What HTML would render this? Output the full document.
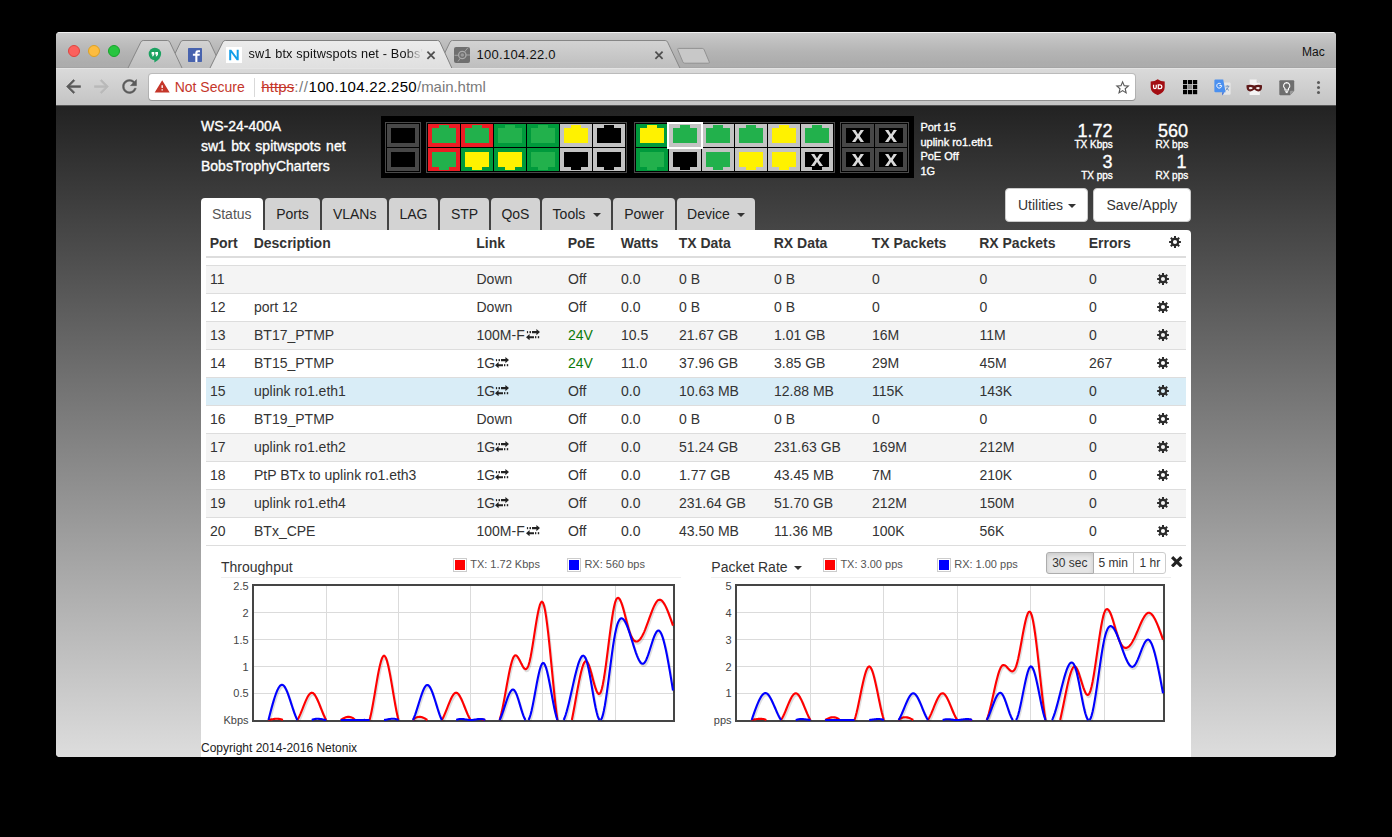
<!DOCTYPE html>
<html><head><meta charset="utf-8"><title>sw1</title>
<style>
*{box-sizing:border-box;margin:0;padding:0}
html,body{width:1392px;height:837px;background:#000;overflow:hidden}
body{font-family:"Liberation Sans",sans-serif;font-size:14px;color:#333;position:relative}
.abs{position:absolute}
#win{position:absolute;left:56px;top:32px;width:1280px;height:725px;border-radius:4px 4px 4px 4px;overflow:hidden;background:#ddd}
#titlebar{position:absolute;left:0;top:0;width:1280px;height:36px;background:linear-gradient(#f0f0f0 0,#f0f0f0 1px,#cbcbcb 1px,#c0c0c0 9px,#b4b4b4 20px,#adadad 30px,#ababab 36px)}
#toolbar{position:absolute;left:0;top:36px;width:1280px;height:38px;background:linear-gradient(#e4e4e4 0,#e4e4e4 1px,#dadada 1px,#c4c4c4 37px);border-bottom:1px solid #555;z-index:3}
#page{position:absolute;left:0;top:73px;width:1280px;height:652px;background:linear-gradient(#222,#ddd);overflow:hidden}
.t{position:absolute;white-space:nowrap;line-height:1}
</style></head>
<body>
<div id="win">
<div id="titlebar">
<div class="abs" style="left:12px;top:13px;width:12px;height:12px;border-radius:50%;background:#fc615d;border:0.5px solid #e0443e"></div>
<div class="abs" style="left:32px;top:13px;width:12px;height:12px;border-radius:50%;background:#fdbc40;border:0.5px solid #dea123"></div>
<div class="abs" style="left:52px;top:13px;width:12px;height:12px;border-radius:50%;background:#27c53f;border:0.5px solid #17a42a"></div>
<svg class="abs" style="left:0;top:0" width="1280" height="36" viewBox="0 0 1280 36">
<defs><linearGradient id="tg" x1="0" y1="0" x2="0" y2="1"><stop offset="0" stop-color="#d3d3d3"/><stop offset="1" stop-color="#bebebe"/></linearGradient><linearGradient id="ta" x1="0" y1="0" x2="0" y2="1"><stop offset="0" stop-color="#ececec"/><stop offset="1" stop-color="#dfdfdf"/></linearGradient></defs>
<rect x="0" y="35.3" width="1280" height="0.7" fill="#a2a2a2"/>
<path d="M381.5,36 L394.0,10.1 Q394.8,8.5 396.4,8.5 L609.2,8.5 Q610.8,8.5 611.6,10.1 L623.9,36" fill="url(#tg)" stroke="#868686" stroke-width="1"/>
<path d="M112.0,36 L124.6,10.1 Q125.4,8.5 127.0,8.5 L151.4,8.5 Q153.0,8.5 153.8,10.1 L166.0,36" fill="url(#tg)" stroke="#868686" stroke-width="1"/>
<path d="M72.0,36 L84.8,10.1 Q85.6,8.5 87.2,8.5 L111.4,8.5 Q113.0,8.5 113.8,10.1 L126.0,36" fill="url(#tg)" stroke="#868686" stroke-width="1"/>
<path d="M622.6,16.4 L646.3,16.4 Q647.6,16.4 648.2,17.8 L653.2,29.8 Q653.8,31.2 652.4,31.2 L628.8,31.2 Q627.4,31.2 626.8,29.8 L621.8,17.8 Q621.3,16.4 622.6,16.4 Z" fill="#c8c8c8" stroke="#929292" stroke-width="1"/>
<path d="M154.0,36 L166.8,10.1 Q167.6,8.5 169.2,8.5 L381.6,8.5 Q383.2,8.5 384.0,10.1 L395.8,36 L400,37 L150,37 Z" fill="url(#ta)" stroke="none"/>
<path d="M154.0,36 L166.8,10.1 Q167.6,8.5 169.2,8.5 L381.6,8.5 Q383.2,8.5 384.0,10.1 L395.8,36" fill="none" stroke="#808080" stroke-width="1"/>
<g transform="translate(98.9,22)"><circle cx="0" cy="0" r="6.2" fill="#1ba261"/><path d="M-0.5,5.5 L-0.5,8.6 Q3.6,6.8 5,3.6 Z" fill="#1ba261"/><path d="M-3.3,-2.1h2.7v2.5l-1.1,1.8h-1.3l0.9,-1.8h-1.2z M0.4,-2.1h2.7v2.5l-1.1,1.8h-1.3l0.9,-1.8h-1.2z" fill="#fff"/></g>
<rect x="132" y="16" width="14" height="14" rx="0.8" fill="#4863ae"/><path d="M139.3,30 V23.7 H136.9 V21.8 H139.3 V20.7 Q139.3,18.3 141.8,18.3 H144 V20.2 H142.5 Q141.4,20.2 141.4,21.2 V21.8 H143.9 L143.6,23.7 H141.4 V30 Z" fill="#fff"/>
<rect x="170" y="15" width="16" height="16" fill="#fff"/><path d="M173.2,28.3 V17.7 h2.1 l5.4,7.4 V17.7 h2 V28.3 h-2 l-5.5,-7.5 V28.3 z" fill="#129ee9"/>
<rect x="398" y="15" width="16" height="16" rx="2" fill="#6f6f6f"/><circle cx="406.3" cy="23" r="3.7" fill="none" stroke="#a9a9a9" stroke-width="1.3"/><circle cx="406.3" cy="23" r="1.8" fill="#9a9a9a"/><path d="M398.5,23.3 H402.5 M410,23 H414 M408.6,19.8 L412,15.6 M404.3,26.2 L402,29.5" stroke="#a9a9a9" stroke-width="0.9" fill="none"/>
<path d="M371.4,19.7 L378.6,26.900000000000002 M378.6,19.7 L371.4,26.900000000000002" stroke="#4f4f4f" stroke-width="1.75" fill="none"/>
<path d="M599.4,19.7 L606.6,26.900000000000002 M606.6,19.7 L599.4,26.900000000000002" stroke="#4f4f4f" stroke-width="1.75" fill="none"/>
</svg>
<div class="t" style="left:192.4px;top:15px;width:175px;overflow:hidden;font-size:12.7px;letter-spacing:0.17px;line-height:15px;color:#111;-webkit-mask-image:linear-gradient(90deg,#000 157px,transparent 175px);mask-image:linear-gradient(90deg,#000 157px,transparent 175px)">sw1 btx spitwspots net - Bobs'TrophyCharters</div>
<div class="t" style="left:420.5px;top:15px;font-size:13px;letter-spacing:0.29px;line-height:15px;color:#111">100.104.22.0</div>
<div class="t" style="left:1246px;top:13px;font-size:12px;line-height:14px;color:#111">Mac</div>
</div>
<div id="toolbar">
<svg class="abs" style="left:7.30px;top:8.20px" width="21.00" height="21" viewBox="0 0 24 24" preserveAspectRatio="none"><path d="M20 11H7.83l5.59-5.59L12 4l-8 8 8 8 1.41-1.41L7.83 13H20v-2z" fill="#5a5a5a" stroke="#5a5a5a" stroke-width="0.7" stroke-linejoin="miter"/></svg>
<svg class="abs" style="left:35.40px;top:8.20px" width="21.00" height="21" viewBox="0 0 24 24" preserveAspectRatio="none"><path d="M12 4l-1.41 1.41L16.17 11H4v2h12.17l-5.58 5.59L12 20l8-8z" fill="#b9b9b9" stroke="#b9b9b9" stroke-width="0.7" stroke-linejoin="miter"/></svg>
<svg class="abs" style="left:63.40px;top:8.30px" width="21.00" height="21" viewBox="0 0 24 24" preserveAspectRatio="none"><path d="M17.65 6.35C16.2 4.9 14.21 4 12 4c-4.42 0-7.99 3.58-7.99 8s3.57 8 7.99 8c3.73 0 6.84-2.55 7.73-6h-2.08c-.82 2.33-3.04 4-5.65 4-3.31 0-6-2.69-6-6s2.69-6 6-6c1.66 0 3.14.69 4.22 1.78L13 11h7V4l-2.35 2.35z" fill="#5a5a5a" stroke="#5a5a5a" stroke-width="0.5" stroke-linejoin="miter"/></svg>
<div class="abs" style="left:93px;top:6px;width:986px;height:26px;background:#fff;border-radius:3px;box-shadow:0 0 0 1px rgba(0,0,0,0.13),0 1px 0 0 rgba(0,0,0,0.16)"></div>
<svg class="abs" style="left:97.71px;top:10.95px" width="16.37" height="15.3" viewBox="0 0 24 24" preserveAspectRatio="none"><path d="M1 21h22L12 2 1 21zm12-3h-2v-2h2v2zm0-4h-2v-4h2v4z" fill="#c5362a" stroke="#c5362a" stroke-width="0" stroke-linejoin="miter"/></svg>
<div class="t" style="left:118.7px;top:10px;font-size:14px;line-height:18px;color:#c5362a">Not Secure</div>
<div class="abs" style="left:197.5px;top:9.5px;width:1px;height:19px;background:#d9d9d9"></div>
<div class="t" style="left:205.3px;top:9.5px;font-size:15px;line-height:18px;letter-spacing:0.3px;color:#7a7a7a"><span style="color:#c5362a;text-decoration:line-through;letter-spacing:0.08px">https</span><span style="letter-spacing:0.6px">://</span><span style="color:#000">100.104.22.250</span><span style="letter-spacing:-0.04px">/main.html</span></div>
<svg class="abs" style="left:1058.40px;top:10.70px" width="17.20" height="17.2" viewBox="0 0 24 24" preserveAspectRatio="none"><path d="M22 9.24l-7.19-.62L12 2 9.19 8.63 2 9.24l5.46 4.73L5.82 21 12 17.27 18.18 21l-1.63-7.03L22 9.24zM12 15.4l-3.76 2.27 1-4.28-3.32-2.88 4.38-.38L12 6.1l1.71 4.04 4.38.38-3.32 2.88 1 4.28L12 15.4z" fill="#5a5a5a" stroke="#5a5a5a" stroke-width="0" stroke-linejoin="miter"/></svg>
<svg class="abs" style="left:1094.3px;top:10.6px" width="15.4" height="16.4" viewBox="0 0 16 17" preserveAspectRatio="none"><path d="M8,0.3 Q5,2.6 0.7,2.7 V8.5 Q0.7,13.8 8,16.7 Q15.3,13.8 15.3,8.5 V2.7 Q11,2.6 8,0.3 Z" fill="#a30d12"/><path d="M3.7,6 V8.6 Q3.7,10.1 5.1,10.1 Q6.5,10.1 6.5,8.6 V6" fill="none" stroke="#fff" stroke-width="1.3"/><path d="M8.6,6.1 H10.3 Q12.3,6.1 12.3,8.05 Q12.3,10 10.3,10 H8.6 Z" fill="none" stroke="#fff" stroke-width="1.3"/></svg>
<svg class="abs" style="left:1126.6px;top:11.8px" width="15" height="15" viewBox="0 0 15 15"><rect x="0" y="0" width="4.2" height="4.2" fill="#000"/><rect x="5" y="0" width="4.2" height="4.2" fill="#000"/><rect x="10" y="0" width="4.2" height="4.2" fill="#000"/><rect x="0" y="5" width="4.2" height="4.2" fill="#000"/><rect x="5" y="5" width="4.2" height="4.2" fill="#8c8c8c"/><rect x="10" y="5" width="4.2" height="4.2" fill="#000"/><rect x="0" y="10" width="4.2" height="4.2" fill="#000"/><rect x="5" y="10" width="4.2" height="4.2" fill="#000"/><rect x="10" y="10" width="4.2" height="4.2" fill="#000"/></svg>
<svg class="abs" style="left:1157.5px;top:10.5px" width="17" height="17" viewBox="0 0 17 17"><path d="M6.5,3.5 H15.6 Q16.6,3.5 16.6,4.5 V14.8 Q16.6,15.8 15.6,15.8 H9.5 Z" fill="#e6e6e6"/><path d="M10.5,13.2 L8.2,16.4 L8.2,13.2 Z" fill="#3367d6"/><path d="M1.3,0.6 H9.2 L11.6,13.2 H1.3 Q0.4,13.2 0.4,12.3 V1.5 Q0.4,0.6 1.3,0.6 Z" fill="#4a90f0"/><path d="M7.6,6.6 H5.4 M7.6,6.6 A2.4,2.4 0 1 1 6.8,4.9" fill="none" stroke="#fff" stroke-width="1"/><path d="M11.4,7.2 H15.4 M13.3,6.3 V7.2 M14.6,7.3 Q13.8,10 11.6,11.4 M12.2,8.6 Q13,10.3 15,11.4" fill="none" stroke="#5f86b8" stroke-width="0.8"/></svg>
<svg class="abs" style="left:1189.5px;top:10.5px" width="17" height="17" viewBox="0 0 17 17"><path d="M3.6,0.6 H10.6 L13.8,3.8 V16 H3.6 Z" fill="#f4f4f4"/><path d="M10.6,0.6 L13.8,3.8 H10.6 Z" fill="#cfcfcf"/><path d="M0.5,6.2 Q4.5,5.4 8.3,6.4 Q12,5.4 16,6.2 Q16.6,11 13.4,12.3 Q10.4,12.9 8.3,10.6 Q6.2,12.9 3.2,12.3 Q0,11 0.5,6.2 Z" fill="#5e1818"/><path d="M2.8,8.4 Q5,7.6 6.9,8.9 Q5.5,10.6 3.7,10.2 Q2.8,9.7 2.8,8.4 Z M13.8,8.4 Q11.6,7.6 9.7,8.9 Q11.1,10.6 12.9,10.2 Q13.8,9.7 13.8,8.4 Z" fill="#f3eeee"/></svg>
<svg class="abs" style="left:1223px;top:12px" width="16" height="16" viewBox="0 0 16 16"><path d="M1.3,0.3 H14.2 Q15.2,0.3 15.2,1.3 V10.8 L11,15.2 H1.3 Q0.3,15.2 0.3,14.2 V1.3 Q0.3,0.3 1.3,0.3 Z" fill="#6e6e6e"/><path d="M15.2,10.8 L11,15.2 V11.8 Q11,10.8 12,10.8 Z" fill="#9a9a9a"/><path d="M7.7,2.6 A3.2,3.2 0 0 1 9.5,8.4 V10 H5.9 V8.4 A3.2,3.2 0 0 1 7.7,2.6 Z" fill="none" stroke="#fff" stroke-width="1.1"/><path d="M6.2,11.3 H9.2 M6.7,12.6 H8.7" stroke="#fff" stroke-width="1" fill="none"/></svg>
<div class="abs" style="left:1260.5px;top:12.5px;width:3px;height:3px;border-radius:50%;background:#5a5a5a"></div>
<div class="abs" style="left:1260.5px;top:17.5px;width:3px;height:3px;border-radius:50%;background:#5a5a5a"></div>
<div class="abs" style="left:1260.5px;top:22.5px;width:3px;height:3px;border-radius:50%;background:#5a5a5a"></div>
</div>
<div id="page">
<div class="t" style="left:145.00px;top:12.00px;color:#fff;-webkit-text-stroke:0.35px #fff;font-size:14px;line-height:19.8px">WS-24-400A<br><span style="word-spacing:1.5px">sw1 btx spitwspots net</span><br>BobsTrophyCharters</div>
<svg class="abs" style="left:325px;top:11px" width="533" height="62" viewBox="0 0 533 62" shape-rendering="crispEdges"><rect width="533" height="62" fill="#000"/><rect x="4.5" y="6.5" width="35" height="50" fill="none" stroke="#4a4a4a" stroke-width="1"/><rect x="45.5" y="6.5" width="200" height="50" fill="none" stroke="#4a4a4a" stroke-width="1"/><rect x="253.5" y="6.5" width="200" height="50" fill="none" stroke="#4a4a4a" stroke-width="1"/><rect x="459.5" y="6.5" width="68" height="50" fill="none" stroke="#4a4a4a" stroke-width="1"/><rect x="6" y="8" width="32" height="23" fill="#474747"/><rect x="10" y="12" width="24" height="15" fill="#000"/><rect x="6" y="32" width="32" height="23" fill="#474747"/><rect x="10" y="36" width="24" height="15" fill="#000"/><rect x="47" y="8" width="32" height="23" fill="#ed1c24"/><rect x="51" y="12" width="24" height="15" fill="#22b14c"/><rect x="58" y="9" width="10" height="3" fill="#22b14c"/><rect x="80" y="8" width="32" height="23" fill="#ed1c24"/><rect x="84" y="12" width="24" height="15" fill="#22b14c"/><rect x="91" y="9" width="10" height="3" fill="#22b14c"/><rect x="113" y="8" width="32" height="23" fill="#009a3c"/><rect x="117" y="12" width="24" height="15" fill="#22b14c"/><rect x="124" y="9" width="10" height="3" fill="#22b14c"/><rect x="146" y="8" width="32" height="23" fill="#009a3c"/><rect x="150" y="12" width="24" height="15" fill="#22b14c"/><rect x="157" y="9" width="10" height="3" fill="#22b14c"/><rect x="179" y="8" width="32" height="23" fill="#c3c3c3"/><rect x="183" y="12" width="24" height="15" fill="#fff200"/><rect x="190" y="9" width="10" height="3" fill="#fff200"/><rect x="212" y="8" width="32" height="23" fill="#c3c3c3"/><rect x="216" y="12" width="24" height="15" fill="#000"/><rect x="223" y="9" width="10" height="3" fill="#000"/><rect x="47" y="32" width="32" height="23" fill="#ed1c24"/><rect x="51" y="36" width="24" height="15" fill="#22b14c"/><rect x="58" y="51" width="10" height="3" fill="#22b14c"/><rect x="80" y="32" width="32" height="23" fill="#009a3c"/><rect x="84" y="36" width="24" height="15" fill="#fff200"/><rect x="91" y="51" width="10" height="3" fill="#fff200"/><rect x="113" y="32" width="32" height="23" fill="#009a3c"/><rect x="117" y="36" width="24" height="15" fill="#fff200"/><rect x="124" y="51" width="10" height="3" fill="#fff200"/><rect x="146" y="32" width="32" height="23" fill="#009a3c"/><rect x="150" y="36" width="24" height="15" fill="#22b14c"/><rect x="157" y="51" width="10" height="3" fill="#22b14c"/><rect x="179" y="32" width="32" height="23" fill="#c3c3c3"/><rect x="183" y="36" width="24" height="15" fill="#000"/><rect x="190" y="51" width="10" height="3" fill="#000"/><rect x="212" y="32" width="32" height="23" fill="#c3c3c3"/><rect x="216" y="36" width="24" height="15" fill="#000"/><rect x="223" y="51" width="10" height="3" fill="#000"/><rect x="255" y="8" width="32" height="23" fill="#009a3c"/><rect x="259" y="12" width="24" height="15" fill="#fff200"/><rect x="266" y="9" width="10" height="3" fill="#fff200"/><rect x="321" y="8" width="32" height="23" fill="#c3c3c3"/><rect x="325" y="12" width="24" height="15" fill="#22b14c"/><rect x="332" y="9" width="10" height="3" fill="#22b14c"/><rect x="354" y="8" width="32" height="23" fill="#c3c3c3"/><rect x="358" y="12" width="24" height="15" fill="#22b14c"/><rect x="365" y="9" width="10" height="3" fill="#22b14c"/><rect x="387" y="8" width="32" height="23" fill="#c3c3c3"/><rect x="391" y="12" width="24" height="15" fill="#fff200"/><rect x="398" y="9" width="10" height="3" fill="#fff200"/><rect x="420" y="8" width="32" height="23" fill="#c3c3c3"/><rect x="424" y="12" width="24" height="15" fill="#22b14c"/><rect x="431" y="9" width="10" height="3" fill="#22b14c"/><rect x="255" y="32" width="32" height="23" fill="#009a3c"/><rect x="259" y="36" width="24" height="15" fill="#22b14c"/><rect x="266" y="51" width="10" height="3" fill="#22b14c"/><rect x="288" y="32" width="32" height="23" fill="#c3c3c3"/><rect x="292" y="36" width="24" height="15" fill="#000"/><rect x="299" y="51" width="10" height="3" fill="#000"/><rect x="321" y="32" width="32" height="23" fill="#c3c3c3"/><rect x="325" y="36" width="24" height="15" fill="#22b14c"/><rect x="332" y="51" width="10" height="3" fill="#22b14c"/><rect x="354" y="32" width="32" height="23" fill="#c3c3c3"/><rect x="358" y="36" width="24" height="15" fill="#fff200"/><rect x="365" y="51" width="10" height="3" fill="#fff200"/><rect x="387" y="32" width="32" height="23" fill="#c3c3c3"/><rect x="391" y="36" width="24" height="15" fill="#fff200"/><rect x="398" y="51" width="10" height="3" fill="#fff200"/><rect x="420" y="32" width="32" height="23" fill="#c3c3c3"/><rect x="424" y="36" width="24" height="15" fill="#000"/><rect x="431" y="51" width="10" height="3" fill="#000"/><path d="M430.0,38.1 L433.4,38.1 L436.0,42.2 L438.6,38.1 L442.0,38.1 L437.8,44.1 L442.0,50.1 L438.6,50.1 L436.0,46.0 L433.4,50.1 L430.0,50.1 L434.2,44.1 Z" fill="#d9d9d9" shape-rendering="geometricPrecision"/><rect x="286" y="6" width="36" height="27" fill="#fff"/><rect x="288" y="8" width="32" height="23" fill="#c3c3c3"/><rect x="292" y="12" width="24" height="15" fill="#22b14c"/><rect x="299" y="9" width="10" height="3" fill="#22b14c"/><rect x="461" y="8" width="32" height="23" fill="#474747"/><rect x="465" y="12" width="24" height="15" fill="#000"/><path d="M471.0,14.1 L474.4,14.1 L477.0,18.2 L479.6,14.1 L483.0,14.1 L478.8,20.1 L483.0,26.1 L479.6,26.1 L477.0,22.0 L474.4,26.1 L471.0,26.1 L475.2,20.1 Z" fill="#d9d9d9" shape-rendering="geometricPrecision"/><rect x="461" y="32" width="32" height="23" fill="#474747"/><rect x="465" y="36" width="24" height="15" fill="#000"/><path d="M471.0,38.1 L474.4,38.1 L477.0,42.2 L479.6,38.1 L483.0,38.1 L478.8,44.1 L483.0,50.1 L479.6,50.1 L477.0,46.0 L474.4,50.1 L471.0,50.1 L475.2,44.1 Z" fill="#d9d9d9" shape-rendering="geometricPrecision"/><rect x="494" y="8" width="32" height="23" fill="#474747"/><rect x="498" y="12" width="24" height="15" fill="#000"/><path d="M504.0,14.1 L507.4,14.1 L510.0,18.2 L512.6,14.1 L516.0,14.1 L511.8,20.1 L516.0,26.1 L512.6,26.1 L510.0,22.0 L507.4,26.1 L504.0,26.1 L508.2,20.1 Z" fill="#d9d9d9" shape-rendering="geometricPrecision"/><rect x="494" y="32" width="32" height="23" fill="#474747"/><rect x="498" y="36" width="24" height="15" fill="#000"/><path d="M504.0,38.1 L507.4,38.1 L510.0,42.2 L512.6,38.1 L516.0,38.1 L511.8,44.1 L516.0,50.1 L512.6,50.1 L510.0,46.0 L507.4,50.1 L504.0,50.1 L508.2,44.1 Z" fill="#d9d9d9" shape-rendering="geometricPrecision"/></svg>
<div class="t" style="left:864.40px;top:14.60px;color:#fff;-webkit-text-stroke:0.35px #fff;font-size:11px;line-height:14.9px">Port 15<br>uplink ro1.eth1<br>PoE Off<br>1G</div>
<div class="t" style="right:223.40px;top:17.20px;font-size:18px;line-height:18px;color:#fff;-webkit-text-stroke:0.35px #fff;">1.72</div>
<div class="t" style="right:223.20px;top:34.90px;font-size:10px;line-height:10px;color:#fff;-webkit-text-stroke:0.35px #fff;">TX Kbps</div>
<div class="t" style="right:223.40px;top:48.40px;font-size:18px;line-height:18px;color:#fff;-webkit-text-stroke:0.35px #fff;">3</div>
<div class="t" style="right:223.20px;top:65.80px;font-size:10px;line-height:10px;color:#fff;-webkit-text-stroke:0.35px #fff;">TX pps</div>
<div class="t" style="right:148.00px;top:17.20px;font-size:18px;line-height:18px;color:#fff;-webkit-text-stroke:0.35px #fff;">560</div>
<div class="t" style="right:147.80px;top:34.90px;font-size:10px;line-height:10px;color:#fff;-webkit-text-stroke:0.35px #fff;">RX bps</div>
<div class="t" style="right:149.40px;top:48.40px;font-size:18px;line-height:18px;color:#fff;-webkit-text-stroke:0.35px #fff;">1</div>
<div class="t" style="right:147.80px;top:65.80px;font-size:10px;line-height:10px;color:#fff;-webkit-text-stroke:0.35px #fff;">RX pps</div>
<div class="abs" style="left:949.00px;top:83.00px;width:83px;height:34px;background:#fff;border:1px solid #ccc;border-radius:4px;"></div>
<div class="t" style="left:962.00px;top:90.00px;font-size:14px;line-height:20px;color:#333">Utilities<span style="display:inline-block;width:0;height:0;margin-left:4.6px;vertical-align:middle;border-top:4px solid #333;border-left:4px solid transparent;border-right:4px solid transparent"></span></div>
<div class="abs" style="left:1037.00px;top:83.00px;width:98px;height:34px;background:#fff;border:1px solid #ccc;border-radius:4px;"></div>
<div class="t" style="left:1050.50px;top:90.00px;font-size:14px;line-height:20px;color:#333">Save/Apply</div>
<div class="abs" style="left:145.00px;top:93px;width:61.50px;height:33px;background:#fff;border-radius:4px 4px 0 0;font-size:14px;line-height:20px;padding:6px 0 0 0;text-align:center;color:#555;white-space:nowrap">Status</div>
<div class="abs" style="left:209.20px;top:93px;width:54.60px;height:32px;background:#d3d3d3;border-radius:4px 4px 0 0;font-size:14px;line-height:20px;padding:6px 0 0 0;text-align:center;color:#222;white-space:nowrap">Ports</div>
<div class="abs" style="left:266.40px;top:93px;width:64.60px;height:32px;background:#d3d3d3;border-radius:4px 4px 0 0;font-size:14px;line-height:20px;padding:6px 0 0 0;text-align:center;color:#222;white-space:nowrap">VLANs</div>
<div class="abs" style="left:333.20px;top:93px;width:48.60px;height:32px;background:#d3d3d3;border-radius:4px 4px 0 0;font-size:14px;line-height:20px;padding:6px 0 0 0;text-align:center;color:#222;white-space:nowrap">LAG</div>
<div class="abs" style="left:384.00px;top:93px;width:49.00px;height:32px;background:#d3d3d3;border-radius:4px 4px 0 0;font-size:14px;line-height:20px;padding:6px 0 0 0;text-align:center;color:#222;white-space:nowrap">STP</div>
<div class="abs" style="left:435.10px;top:93px;width:48.70px;height:32px;background:#d3d3d3;border-radius:4px 4px 0 0;font-size:14px;line-height:20px;padding:6px 0 0 0;text-align:center;color:#222;white-space:nowrap">QoS</div>
<div class="abs" style="left:486.40px;top:93px;width:68.60px;height:32px;background:#d3d3d3;border-radius:4px 4px 0 0;font-size:14px;line-height:20px;padding:6px 0 0 0;text-align:center;color:#222;white-space:nowrap">Tools <span style="display:inline-block;width:0;height:0;margin-left:3.6px;vertical-align:middle;border-top:4px solid #333;border-left:4px solid transparent;border-right:4px solid transparent"></span></div>
<div class="abs" style="left:557.20px;top:93px;width:61.80px;height:32px;background:#d3d3d3;border-radius:4px 4px 0 0;font-size:14px;line-height:20px;padding:6px 0 0 0;text-align:center;color:#222;white-space:nowrap">Power</div>
<div class="abs" style="left:621.10px;top:93px;width:77.90px;height:32px;background:#d3d3d3;border-radius:4px 4px 0 0;font-size:14px;line-height:20px;padding:6px 0 0 0;text-align:center;color:#222;white-space:nowrap">Device <span style="display:inline-block;width:0;height:0;margin-left:3.2px;vertical-align:middle;border-top:4px solid #333;border-left:4px solid transparent;border-right:4px solid transparent"></span></div>
<div class="abs" style="left:145.00px;top:124.50px;width:990px;height:528px;background:#fff;border-radius:0 4px 0 0"></div>
<div class="t" style="left:153.70px;top:128.00px;font-weight:bold;font-size:14px;line-height:20px;color:#333">Port</div>
<div class="t" style="left:197.70px;top:128.00px;font-weight:bold;font-size:14px;line-height:20px;color:#333">Description</div>
<div class="t" style="left:420.20px;top:128.00px;font-weight:bold;font-size:14px;line-height:20px;color:#333">Link</div>
<div class="t" style="left:511.70px;top:128.00px;font-weight:bold;font-size:14px;line-height:20px;color:#333">PoE</div>
<div class="t" style="left:564.70px;top:128.00px;font-weight:bold;font-size:14px;line-height:20px;color:#333">Watts</div>
<div class="t" style="left:622.70px;top:128.00px;font-weight:bold;font-size:14px;line-height:20px;color:#333">TX Data</div>
<div class="t" style="left:717.70px;top:128.00px;font-weight:bold;font-size:14px;line-height:20px;color:#333">RX Data</div>
<div class="t" style="left:815.70px;top:128.00px;font-weight:bold;font-size:14px;line-height:20px;color:#333">TX Packets</div>
<div class="t" style="left:923.20px;top:128.00px;font-weight:bold;font-size:14px;line-height:20px;color:#333">RX Packets</div>
<div class="t" style="left:1032.70px;top:128.00px;font-weight:bold;font-size:14px;line-height:20px;color:#333">Errors</div>
<svg class="abs" style="left:1113.00px;top:131.00px" width="12" height="12" viewBox="0 0 24 24"><path d="M9.96,3.65 L9.97,0.17 L14.03,0.17 L14.04,3.65 L16.46,4.65 L18.93,2.20 L21.80,5.07 L19.35,7.54 L20.35,9.96 L23.83,9.97 L23.83,14.03 L20.35,14.04 L19.35,16.46 L21.80,18.93 L18.93,21.80 L16.46,19.35 L14.04,20.35 L14.03,23.83 L9.97,23.83 L9.96,20.35 L7.54,19.35 L5.07,21.80 L2.20,18.93 L4.65,16.46 L3.65,14.04 L0.17,14.03 L0.17,9.97 L3.65,9.96 L4.65,7.54 L2.20,5.07 L5.07,2.20 L7.54,4.65 Z M12,7.9 A4.1,4.1 0 1 0 12,16.1 A4.1,4.1 0 1 0 12,7.9 Z" fill="#2b2b2b" fill-rule="evenodd"/></svg>
<div class="abs" style="left:150.00px;top:151.00px;width:980px;height:2px;background:#ddd"></div>
<div class="abs" style="left:150.00px;top:160.00px;width:980px;height:28px;background:#f4f4f4;border-top:1px solid #ddd"></div>
<div class="t" style="left:154.00px;top:164.20px;font-size:14px;line-height:20px;color:#333">11</div>
<div class="t" style="left:420.50px;top:164.20px;font-size:14px;line-height:20px;color:#333">Down</div>
<div class="t" style="left:512.00px;top:164.20px;font-size:14px;line-height:20px;color:#333">Off</div>
<div class="t" style="left:565.00px;top:164.20px;font-size:14px;line-height:20px;color:#333">0.0</div>
<div class="t" style="left:623.00px;top:164.20px;font-size:14px;line-height:20px;color:#333">0 B</div>
<div class="t" style="left:718.00px;top:164.20px;font-size:14px;line-height:20px;color:#333">0 B</div>
<div class="t" style="left:816.00px;top:164.20px;font-size:14px;line-height:20px;color:#333">0</div>
<div class="t" style="left:923.50px;top:164.20px;font-size:14px;line-height:20px;color:#333">0</div>
<div class="t" style="left:1033.00px;top:164.20px;font-size:14px;line-height:20px;color:#333">0</div>
<svg class="abs" style="left:1101.00px;top:168.00px" width="12" height="12" viewBox="0 0 24 24"><path d="M9.96,3.65 L9.97,0.17 L14.03,0.17 L14.04,3.65 L16.46,4.65 L18.93,2.20 L21.80,5.07 L19.35,7.54 L20.35,9.96 L23.83,9.97 L23.83,14.03 L20.35,14.04 L19.35,16.46 L21.80,18.93 L18.93,21.80 L16.46,19.35 L14.04,20.35 L14.03,23.83 L9.97,23.83 L9.96,20.35 L7.54,19.35 L5.07,21.80 L2.20,18.93 L4.65,16.46 L3.65,14.04 L0.17,14.03 L0.17,9.97 L3.65,9.96 L4.65,7.54 L2.20,5.07 L5.07,2.20 L7.54,4.65 Z M12,7.9 A4.1,4.1 0 1 0 12,16.1 A4.1,4.1 0 1 0 12,7.9 Z" fill="#2b2b2b" fill-rule="evenodd"/></svg>
<div class="abs" style="left:150.00px;top:188.00px;width:980px;height:28px;background:#fff;border-top:1px solid #ddd"></div>
<div class="t" style="left:154.00px;top:192.20px;font-size:14px;line-height:20px;color:#333">12</div>
<div class="t" style="left:198.00px;top:192.20px;font-size:14px;line-height:20px;color:#333">port 12</div>
<div class="t" style="left:420.50px;top:192.20px;font-size:14px;line-height:20px;color:#333">Down</div>
<div class="t" style="left:512.00px;top:192.20px;font-size:14px;line-height:20px;color:#333">Off</div>
<div class="t" style="left:565.00px;top:192.20px;font-size:14px;line-height:20px;color:#333">0.0</div>
<div class="t" style="left:623.00px;top:192.20px;font-size:14px;line-height:20px;color:#333">0 B</div>
<div class="t" style="left:718.00px;top:192.20px;font-size:14px;line-height:20px;color:#333">0 B</div>
<div class="t" style="left:816.00px;top:192.20px;font-size:14px;line-height:20px;color:#333">0</div>
<div class="t" style="left:923.50px;top:192.20px;font-size:14px;line-height:20px;color:#333">0</div>
<div class="t" style="left:1033.00px;top:192.20px;font-size:14px;line-height:20px;color:#333">0</div>
<svg class="abs" style="left:1101.00px;top:196.00px" width="12" height="12" viewBox="0 0 24 24"><path d="M9.96,3.65 L9.97,0.17 L14.03,0.17 L14.04,3.65 L16.46,4.65 L18.93,2.20 L21.80,5.07 L19.35,7.54 L20.35,9.96 L23.83,9.97 L23.83,14.03 L20.35,14.04 L19.35,16.46 L21.80,18.93 L18.93,21.80 L16.46,19.35 L14.04,20.35 L14.03,23.83 L9.97,23.83 L9.96,20.35 L7.54,19.35 L5.07,21.80 L2.20,18.93 L4.65,16.46 L3.65,14.04 L0.17,14.03 L0.17,9.97 L3.65,9.96 L4.65,7.54 L2.20,5.07 L5.07,2.20 L7.54,4.65 Z M12,7.9 A4.1,4.1 0 1 0 12,16.1 A4.1,4.1 0 1 0 12,7.9 Z" fill="#2b2b2b" fill-rule="evenodd"/></svg>
<div class="abs" style="left:150.00px;top:216.00px;width:980px;height:28px;background:#f4f4f4;border-top:1px solid #ddd"></div>
<div class="t" style="left:154.00px;top:220.20px;font-size:14px;line-height:20px;color:#333">13</div>
<div class="t" style="left:198.00px;top:220.20px;font-size:14px;line-height:20px;color:#333">BT17_PTMP</div>
<div class="t" style="left:420.50px;top:220.20px;font-size:14px;line-height:20px;color:#333">100M-F</div>
<svg class="abs" style="left:470.00px;top:223.80px" width="14" height="11.2" viewBox="0 0 14 11.2"><g fill="#222"><path d="M10.4,0 L14,3.1 L10.4,6.2 V4.2 H6 V2.1 H10.4 Z"/><rect x="3.5" y="2.1" width="1.5" height="2.1"/><rect x="0.9" y="2.1" width="1.2" height="2.1"/><path d="M3.6,5.1 L0,8.2 L3.6,11.3 V9.25 H8 V7.15 H3.6 Z"/><rect x="9" y="7.15" width="1.3" height="2.1"/><rect x="11.8" y="7.15" width="1.4" height="2.1"/></g></svg>
<div class="t" style="left:512.00px;top:220.20px;font-size:14px;line-height:20px;color:#0a7a0a">24V</div>
<div class="t" style="left:565.00px;top:220.20px;font-size:14px;line-height:20px;color:#333">10.5</div>
<div class="t" style="left:623.00px;top:220.20px;font-size:14px;line-height:20px;color:#333">21.67 GB</div>
<div class="t" style="left:718.00px;top:220.20px;font-size:14px;line-height:20px;color:#333">1.01 GB</div>
<div class="t" style="left:816.00px;top:220.20px;font-size:14px;line-height:20px;color:#333">16M</div>
<div class="t" style="left:923.50px;top:220.20px;font-size:14px;line-height:20px;color:#333">11M</div>
<div class="t" style="left:1033.00px;top:220.20px;font-size:14px;line-height:20px;color:#333">0</div>
<svg class="abs" style="left:1101.00px;top:224.00px" width="12" height="12" viewBox="0 0 24 24"><path d="M9.96,3.65 L9.97,0.17 L14.03,0.17 L14.04,3.65 L16.46,4.65 L18.93,2.20 L21.80,5.07 L19.35,7.54 L20.35,9.96 L23.83,9.97 L23.83,14.03 L20.35,14.04 L19.35,16.46 L21.80,18.93 L18.93,21.80 L16.46,19.35 L14.04,20.35 L14.03,23.83 L9.97,23.83 L9.96,20.35 L7.54,19.35 L5.07,21.80 L2.20,18.93 L4.65,16.46 L3.65,14.04 L0.17,14.03 L0.17,9.97 L3.65,9.96 L4.65,7.54 L2.20,5.07 L5.07,2.20 L7.54,4.65 Z M12,7.9 A4.1,4.1 0 1 0 12,16.1 A4.1,4.1 0 1 0 12,7.9 Z" fill="#2b2b2b" fill-rule="evenodd"/></svg>
<div class="abs" style="left:150.00px;top:244.00px;width:980px;height:28px;background:#fff;border-top:1px solid #ddd"></div>
<div class="t" style="left:154.00px;top:248.20px;font-size:14px;line-height:20px;color:#333">14</div>
<div class="t" style="left:198.00px;top:248.20px;font-size:14px;line-height:20px;color:#333">BT15_PTMP</div>
<div class="t" style="left:420.50px;top:248.20px;font-size:14px;line-height:20px;color:#333">1G</div>
<svg class="abs" style="left:439.30px;top:251.80px" width="14" height="11.2" viewBox="0 0 14 11.2"><g fill="#222"><path d="M10.4,0 L14,3.1 L10.4,6.2 V4.2 H6 V2.1 H10.4 Z"/><rect x="3.5" y="2.1" width="1.5" height="2.1"/><rect x="0.9" y="2.1" width="1.2" height="2.1"/><path d="M3.6,5.1 L0,8.2 L3.6,11.3 V9.25 H8 V7.15 H3.6 Z"/><rect x="9" y="7.15" width="1.3" height="2.1"/><rect x="11.8" y="7.15" width="1.4" height="2.1"/></g></svg>
<div class="t" style="left:512.00px;top:248.20px;font-size:14px;line-height:20px;color:#0a7a0a">24V</div>
<div class="t" style="left:565.00px;top:248.20px;font-size:14px;line-height:20px;color:#333">11.0</div>
<div class="t" style="left:623.00px;top:248.20px;font-size:14px;line-height:20px;color:#333">37.96 GB</div>
<div class="t" style="left:718.00px;top:248.20px;font-size:14px;line-height:20px;color:#333">3.85 GB</div>
<div class="t" style="left:816.00px;top:248.20px;font-size:14px;line-height:20px;color:#333">29M</div>
<div class="t" style="left:923.50px;top:248.20px;font-size:14px;line-height:20px;color:#333">45M</div>
<div class="t" style="left:1033.00px;top:248.20px;font-size:14px;line-height:20px;color:#333">267</div>
<svg class="abs" style="left:1101.00px;top:252.00px" width="12" height="12" viewBox="0 0 24 24"><path d="M9.96,3.65 L9.97,0.17 L14.03,0.17 L14.04,3.65 L16.46,4.65 L18.93,2.20 L21.80,5.07 L19.35,7.54 L20.35,9.96 L23.83,9.97 L23.83,14.03 L20.35,14.04 L19.35,16.46 L21.80,18.93 L18.93,21.80 L16.46,19.35 L14.04,20.35 L14.03,23.83 L9.97,23.83 L9.96,20.35 L7.54,19.35 L5.07,21.80 L2.20,18.93 L4.65,16.46 L3.65,14.04 L0.17,14.03 L0.17,9.97 L3.65,9.96 L4.65,7.54 L2.20,5.07 L5.07,2.20 L7.54,4.65 Z M12,7.9 A4.1,4.1 0 1 0 12,16.1 A4.1,4.1 0 1 0 12,7.9 Z" fill="#2b2b2b" fill-rule="evenodd"/></svg>
<div class="abs" style="left:150.00px;top:272.00px;width:980px;height:28px;background:#d9edf7;border-top:1px solid #ddd"></div>
<div class="t" style="left:154.00px;top:276.20px;font-size:14px;line-height:20px;color:#333">15</div>
<div class="t" style="left:198.00px;top:276.20px;font-size:14px;line-height:20px;color:#333">uplink ro1.eth1</div>
<div class="t" style="left:420.50px;top:276.20px;font-size:14px;line-height:20px;color:#333">1G</div>
<svg class="abs" style="left:439.30px;top:279.80px" width="14" height="11.2" viewBox="0 0 14 11.2"><g fill="#222"><path d="M10.4,0 L14,3.1 L10.4,6.2 V4.2 H6 V2.1 H10.4 Z"/><rect x="3.5" y="2.1" width="1.5" height="2.1"/><rect x="0.9" y="2.1" width="1.2" height="2.1"/><path d="M3.6,5.1 L0,8.2 L3.6,11.3 V9.25 H8 V7.15 H3.6 Z"/><rect x="9" y="7.15" width="1.3" height="2.1"/><rect x="11.8" y="7.15" width="1.4" height="2.1"/></g></svg>
<div class="t" style="left:512.00px;top:276.20px;font-size:14px;line-height:20px;color:#333">Off</div>
<div class="t" style="left:565.00px;top:276.20px;font-size:14px;line-height:20px;color:#333">0.0</div>
<div class="t" style="left:623.00px;top:276.20px;font-size:14px;line-height:20px;color:#333">10.63 MB</div>
<div class="t" style="left:718.00px;top:276.20px;font-size:14px;line-height:20px;color:#333">12.88 MB</div>
<div class="t" style="left:816.00px;top:276.20px;font-size:14px;line-height:20px;color:#333">115K</div>
<div class="t" style="left:923.50px;top:276.20px;font-size:14px;line-height:20px;color:#333">143K</div>
<div class="t" style="left:1033.00px;top:276.20px;font-size:14px;line-height:20px;color:#333">0</div>
<svg class="abs" style="left:1101.00px;top:280.00px" width="12" height="12" viewBox="0 0 24 24"><path d="M9.96,3.65 L9.97,0.17 L14.03,0.17 L14.04,3.65 L16.46,4.65 L18.93,2.20 L21.80,5.07 L19.35,7.54 L20.35,9.96 L23.83,9.97 L23.83,14.03 L20.35,14.04 L19.35,16.46 L21.80,18.93 L18.93,21.80 L16.46,19.35 L14.04,20.35 L14.03,23.83 L9.97,23.83 L9.96,20.35 L7.54,19.35 L5.07,21.80 L2.20,18.93 L4.65,16.46 L3.65,14.04 L0.17,14.03 L0.17,9.97 L3.65,9.96 L4.65,7.54 L2.20,5.07 L5.07,2.20 L7.54,4.65 Z M12,7.9 A4.1,4.1 0 1 0 12,16.1 A4.1,4.1 0 1 0 12,7.9 Z" fill="#2b2b2b" fill-rule="evenodd"/></svg>
<div class="abs" style="left:150.00px;top:300.00px;width:980px;height:28px;background:#fff;border-top:1px solid #ddd"></div>
<div class="t" style="left:154.00px;top:304.20px;font-size:14px;line-height:20px;color:#333">16</div>
<div class="t" style="left:198.00px;top:304.20px;font-size:14px;line-height:20px;color:#333">BT19_PTMP</div>
<div class="t" style="left:420.50px;top:304.20px;font-size:14px;line-height:20px;color:#333">Down</div>
<div class="t" style="left:512.00px;top:304.20px;font-size:14px;line-height:20px;color:#333">Off</div>
<div class="t" style="left:565.00px;top:304.20px;font-size:14px;line-height:20px;color:#333">0.0</div>
<div class="t" style="left:623.00px;top:304.20px;font-size:14px;line-height:20px;color:#333">0 B</div>
<div class="t" style="left:718.00px;top:304.20px;font-size:14px;line-height:20px;color:#333">0 B</div>
<div class="t" style="left:816.00px;top:304.20px;font-size:14px;line-height:20px;color:#333">0</div>
<div class="t" style="left:923.50px;top:304.20px;font-size:14px;line-height:20px;color:#333">0</div>
<div class="t" style="left:1033.00px;top:304.20px;font-size:14px;line-height:20px;color:#333">0</div>
<svg class="abs" style="left:1101.00px;top:308.00px" width="12" height="12" viewBox="0 0 24 24"><path d="M9.96,3.65 L9.97,0.17 L14.03,0.17 L14.04,3.65 L16.46,4.65 L18.93,2.20 L21.80,5.07 L19.35,7.54 L20.35,9.96 L23.83,9.97 L23.83,14.03 L20.35,14.04 L19.35,16.46 L21.80,18.93 L18.93,21.80 L16.46,19.35 L14.04,20.35 L14.03,23.83 L9.97,23.83 L9.96,20.35 L7.54,19.35 L5.07,21.80 L2.20,18.93 L4.65,16.46 L3.65,14.04 L0.17,14.03 L0.17,9.97 L3.65,9.96 L4.65,7.54 L2.20,5.07 L5.07,2.20 L7.54,4.65 Z M12,7.9 A4.1,4.1 0 1 0 12,16.1 A4.1,4.1 0 1 0 12,7.9 Z" fill="#2b2b2b" fill-rule="evenodd"/></svg>
<div class="abs" style="left:150.00px;top:328.00px;width:980px;height:28px;background:#f4f4f4;border-top:1px solid #ddd"></div>
<div class="t" style="left:154.00px;top:332.20px;font-size:14px;line-height:20px;color:#333">17</div>
<div class="t" style="left:198.00px;top:332.20px;font-size:14px;line-height:20px;color:#333">uplink ro1.eth2</div>
<div class="t" style="left:420.50px;top:332.20px;font-size:14px;line-height:20px;color:#333">1G</div>
<svg class="abs" style="left:439.30px;top:335.80px" width="14" height="11.2" viewBox="0 0 14 11.2"><g fill="#222"><path d="M10.4,0 L14,3.1 L10.4,6.2 V4.2 H6 V2.1 H10.4 Z"/><rect x="3.5" y="2.1" width="1.5" height="2.1"/><rect x="0.9" y="2.1" width="1.2" height="2.1"/><path d="M3.6,5.1 L0,8.2 L3.6,11.3 V9.25 H8 V7.15 H3.6 Z"/><rect x="9" y="7.15" width="1.3" height="2.1"/><rect x="11.8" y="7.15" width="1.4" height="2.1"/></g></svg>
<div class="t" style="left:512.00px;top:332.20px;font-size:14px;line-height:20px;color:#333">Off</div>
<div class="t" style="left:565.00px;top:332.20px;font-size:14px;line-height:20px;color:#333">0.0</div>
<div class="t" style="left:623.00px;top:332.20px;font-size:14px;line-height:20px;color:#333">51.24 GB</div>
<div class="t" style="left:718.00px;top:332.20px;font-size:14px;line-height:20px;color:#333">231.63 GB</div>
<div class="t" style="left:816.00px;top:332.20px;font-size:14px;line-height:20px;color:#333">169M</div>
<div class="t" style="left:923.50px;top:332.20px;font-size:14px;line-height:20px;color:#333">212M</div>
<div class="t" style="left:1033.00px;top:332.20px;font-size:14px;line-height:20px;color:#333">0</div>
<svg class="abs" style="left:1101.00px;top:336.00px" width="12" height="12" viewBox="0 0 24 24"><path d="M9.96,3.65 L9.97,0.17 L14.03,0.17 L14.04,3.65 L16.46,4.65 L18.93,2.20 L21.80,5.07 L19.35,7.54 L20.35,9.96 L23.83,9.97 L23.83,14.03 L20.35,14.04 L19.35,16.46 L21.80,18.93 L18.93,21.80 L16.46,19.35 L14.04,20.35 L14.03,23.83 L9.97,23.83 L9.96,20.35 L7.54,19.35 L5.07,21.80 L2.20,18.93 L4.65,16.46 L3.65,14.04 L0.17,14.03 L0.17,9.97 L3.65,9.96 L4.65,7.54 L2.20,5.07 L5.07,2.20 L7.54,4.65 Z M12,7.9 A4.1,4.1 0 1 0 12,16.1 A4.1,4.1 0 1 0 12,7.9 Z" fill="#2b2b2b" fill-rule="evenodd"/></svg>
<div class="abs" style="left:150.00px;top:356.00px;width:980px;height:28px;background:#fff;border-top:1px solid #ddd"></div>
<div class="t" style="left:154.00px;top:360.20px;font-size:14px;line-height:20px;color:#333">18</div>
<div class="t" style="left:198.00px;top:360.20px;font-size:14px;line-height:20px;color:#333">PtP BTx to uplink ro1.eth3</div>
<div class="t" style="left:420.50px;top:360.20px;font-size:14px;line-height:20px;color:#333">1G</div>
<svg class="abs" style="left:439.30px;top:363.80px" width="14" height="11.2" viewBox="0 0 14 11.2"><g fill="#222"><path d="M10.4,0 L14,3.1 L10.4,6.2 V4.2 H6 V2.1 H10.4 Z"/><rect x="3.5" y="2.1" width="1.5" height="2.1"/><rect x="0.9" y="2.1" width="1.2" height="2.1"/><path d="M3.6,5.1 L0,8.2 L3.6,11.3 V9.25 H8 V7.15 H3.6 Z"/><rect x="9" y="7.15" width="1.3" height="2.1"/><rect x="11.8" y="7.15" width="1.4" height="2.1"/></g></svg>
<div class="t" style="left:512.00px;top:360.20px;font-size:14px;line-height:20px;color:#333">Off</div>
<div class="t" style="left:565.00px;top:360.20px;font-size:14px;line-height:20px;color:#333">0.0</div>
<div class="t" style="left:623.00px;top:360.20px;font-size:14px;line-height:20px;color:#333">1.77 GB</div>
<div class="t" style="left:718.00px;top:360.20px;font-size:14px;line-height:20px;color:#333">43.45 MB</div>
<div class="t" style="left:816.00px;top:360.20px;font-size:14px;line-height:20px;color:#333">7M</div>
<div class="t" style="left:923.50px;top:360.20px;font-size:14px;line-height:20px;color:#333">210K</div>
<div class="t" style="left:1033.00px;top:360.20px;font-size:14px;line-height:20px;color:#333">0</div>
<svg class="abs" style="left:1101.00px;top:364.00px" width="12" height="12" viewBox="0 0 24 24"><path d="M9.96,3.65 L9.97,0.17 L14.03,0.17 L14.04,3.65 L16.46,4.65 L18.93,2.20 L21.80,5.07 L19.35,7.54 L20.35,9.96 L23.83,9.97 L23.83,14.03 L20.35,14.04 L19.35,16.46 L21.80,18.93 L18.93,21.80 L16.46,19.35 L14.04,20.35 L14.03,23.83 L9.97,23.83 L9.96,20.35 L7.54,19.35 L5.07,21.80 L2.20,18.93 L4.65,16.46 L3.65,14.04 L0.17,14.03 L0.17,9.97 L3.65,9.96 L4.65,7.54 L2.20,5.07 L5.07,2.20 L7.54,4.65 Z M12,7.9 A4.1,4.1 0 1 0 12,16.1 A4.1,4.1 0 1 0 12,7.9 Z" fill="#2b2b2b" fill-rule="evenodd"/></svg>
<div class="abs" style="left:150.00px;top:384.00px;width:980px;height:28px;background:#f4f4f4;border-top:1px solid #ddd"></div>
<div class="t" style="left:154.00px;top:388.20px;font-size:14px;line-height:20px;color:#333">19</div>
<div class="t" style="left:198.00px;top:388.20px;font-size:14px;line-height:20px;color:#333">uplink ro1.eth4</div>
<div class="t" style="left:420.50px;top:388.20px;font-size:14px;line-height:20px;color:#333">1G</div>
<svg class="abs" style="left:439.30px;top:391.80px" width="14" height="11.2" viewBox="0 0 14 11.2"><g fill="#222"><path d="M10.4,0 L14,3.1 L10.4,6.2 V4.2 H6 V2.1 H10.4 Z"/><rect x="3.5" y="2.1" width="1.5" height="2.1"/><rect x="0.9" y="2.1" width="1.2" height="2.1"/><path d="M3.6,5.1 L0,8.2 L3.6,11.3 V9.25 H8 V7.15 H3.6 Z"/><rect x="9" y="7.15" width="1.3" height="2.1"/><rect x="11.8" y="7.15" width="1.4" height="2.1"/></g></svg>
<div class="t" style="left:512.00px;top:388.20px;font-size:14px;line-height:20px;color:#333">Off</div>
<div class="t" style="left:565.00px;top:388.20px;font-size:14px;line-height:20px;color:#333">0.0</div>
<div class="t" style="left:623.00px;top:388.20px;font-size:14px;line-height:20px;color:#333">231.64 GB</div>
<div class="t" style="left:718.00px;top:388.20px;font-size:14px;line-height:20px;color:#333">51.70 GB</div>
<div class="t" style="left:816.00px;top:388.20px;font-size:14px;line-height:20px;color:#333">212M</div>
<div class="t" style="left:923.50px;top:388.20px;font-size:14px;line-height:20px;color:#333">150M</div>
<div class="t" style="left:1033.00px;top:388.20px;font-size:14px;line-height:20px;color:#333">0</div>
<svg class="abs" style="left:1101.00px;top:392.00px" width="12" height="12" viewBox="0 0 24 24"><path d="M9.96,3.65 L9.97,0.17 L14.03,0.17 L14.04,3.65 L16.46,4.65 L18.93,2.20 L21.80,5.07 L19.35,7.54 L20.35,9.96 L23.83,9.97 L23.83,14.03 L20.35,14.04 L19.35,16.46 L21.80,18.93 L18.93,21.80 L16.46,19.35 L14.04,20.35 L14.03,23.83 L9.97,23.83 L9.96,20.35 L7.54,19.35 L5.07,21.80 L2.20,18.93 L4.65,16.46 L3.65,14.04 L0.17,14.03 L0.17,9.97 L3.65,9.96 L4.65,7.54 L2.20,5.07 L5.07,2.20 L7.54,4.65 Z M12,7.9 A4.1,4.1 0 1 0 12,16.1 A4.1,4.1 0 1 0 12,7.9 Z" fill="#2b2b2b" fill-rule="evenodd"/></svg>
<div class="abs" style="left:150.00px;top:412.00px;width:980px;height:28px;background:#fff;border-top:1px solid #ddd"></div>
<div class="t" style="left:154.00px;top:416.20px;font-size:14px;line-height:20px;color:#333">20</div>
<div class="t" style="left:198.00px;top:416.20px;font-size:14px;line-height:20px;color:#333">BTx_CPE</div>
<div class="t" style="left:420.50px;top:416.20px;font-size:14px;line-height:20px;color:#333">100M-F</div>
<svg class="abs" style="left:470.00px;top:419.80px" width="14" height="11.2" viewBox="0 0 14 11.2"><g fill="#222"><path d="M10.4,0 L14,3.1 L10.4,6.2 V4.2 H6 V2.1 H10.4 Z"/><rect x="3.5" y="2.1" width="1.5" height="2.1"/><rect x="0.9" y="2.1" width="1.2" height="2.1"/><path d="M3.6,5.1 L0,8.2 L3.6,11.3 V9.25 H8 V7.15 H3.6 Z"/><rect x="9" y="7.15" width="1.3" height="2.1"/><rect x="11.8" y="7.15" width="1.4" height="2.1"/></g></svg>
<div class="t" style="left:512.00px;top:416.20px;font-size:14px;line-height:20px;color:#333">Off</div>
<div class="t" style="left:565.00px;top:416.20px;font-size:14px;line-height:20px;color:#333">0.0</div>
<div class="t" style="left:623.00px;top:416.20px;font-size:14px;line-height:20px;color:#333">43.50 MB</div>
<div class="t" style="left:718.00px;top:416.20px;font-size:14px;line-height:20px;color:#333">11.36 MB</div>
<div class="t" style="left:816.00px;top:416.20px;font-size:14px;line-height:20px;color:#333">100K</div>
<div class="t" style="left:923.50px;top:416.20px;font-size:14px;line-height:20px;color:#333">56K</div>
<div class="t" style="left:1033.00px;top:416.20px;font-size:14px;line-height:20px;color:#333">0</div>
<svg class="abs" style="left:1101.00px;top:420.00px" width="12" height="12" viewBox="0 0 24 24"><path d="M9.96,3.65 L9.97,0.17 L14.03,0.17 L14.04,3.65 L16.46,4.65 L18.93,2.20 L21.80,5.07 L19.35,7.54 L20.35,9.96 L23.83,9.97 L23.83,14.03 L20.35,14.04 L19.35,16.46 L21.80,18.93 L18.93,21.80 L16.46,19.35 L14.04,20.35 L14.03,23.83 L9.97,23.83 L9.96,20.35 L7.54,19.35 L5.07,21.80 L2.20,18.93 L4.65,16.46 L3.65,14.04 L0.17,14.03 L0.17,9.97 L3.65,9.96 L4.65,7.54 L2.20,5.07 L5.07,2.20 L7.54,4.65 Z M12,7.9 A4.1,4.1 0 1 0 12,16.1 A4.1,4.1 0 1 0 12,7.9 Z" fill="#2b2b2b" fill-rule="evenodd"/></svg>
<div class="abs" style="left:150.00px;top:440.00px;width:980px;height:1px;background:#ddd"></div>
<div class="t" style="left:165.00px;top:452.00px;font-size:14px;line-height:20px;color:#333">Throughput</div>
<div class="abs" style="left:165.00px;top:472.00px;width:460px;height:1px;background:#eee"></div>
<div class="abs" style="left:397.00px;top:452.50px;width:14px;height:14px;border:1px solid #ccc;padding:1px;background:#fff"></div><div class="abs" style="left:399.00px;top:454.50px;width:10px;height:10px;background:#ff0000"></div>
<div class="t" style="left:414.20px;top:451.60px;font-size:11px;line-height:14px;color:#545454">TX: 1.72 Kbps</div>
<div class="abs" style="left:511.00px;top:452.50px;width:14px;height:14px;border:1px solid #ccc;padding:1px;background:#fff"></div><div class="abs" style="left:513.00px;top:454.50px;width:10px;height:10px;background:#0000ff"></div>
<div class="t" style="left:528.40px;top:451.60px;font-size:11px;line-height:14px;color:#545454">RX: 560 bps</div>
<div class="t" style="left:655.30px;top:452.00px;font-size:14px;line-height:20px;color:#333">Packet Rate <span style="display:inline-block;width:0;height:0;margin-left:2.6px;vertical-align:middle;border-top:4px solid #333;border-left:4px solid transparent;border-right:4px solid transparent"></span></div>
<div class="abs" style="left:655.00px;top:472.00px;width:460px;height:1px;background:#eee"></div>
<div class="abs" style="left:767.20px;top:452.50px;width:14px;height:14px;border:1px solid #ccc;padding:1px;background:#fff"></div><div class="abs" style="left:769.20px;top:454.50px;width:10px;height:10px;background:#ff0000"></div>
<div class="t" style="left:784.40px;top:451.60px;font-size:11px;line-height:14px;color:#545454">TX: 3.00 pps</div>
<div class="abs" style="left:881.40px;top:452.50px;width:14px;height:14px;border:1px solid #ccc;padding:1px;background:#fff"></div><div class="abs" style="left:883.40px;top:454.50px;width:10px;height:10px;background:#0000ff"></div>
<div class="t" style="left:898.20px;top:451.60px;font-size:11px;line-height:14px;color:#545454">RX: 1.00 pps</div>
<div class="abs" style="left:990.00px;top:447.00px;width:48px;height:22px;background:#e6e6e6;border:1px solid #adadad;border-radius:3px 0 0 3px;box-shadow:inset 0 2px 4px rgba(0,0,0,0.12)"></div>
<div class="abs" style="left:1037.00px;top:447.00px;width:41px;height:22px;background:#fff;border:1px solid #ccc;border-left-color:#adadad"></div>
<div class="abs" style="left:1077.00px;top:447.00px;width:32.5px;height:22px;background:#fff;border:1px solid #ccc;border-radius:0 3px 3px 0"></div>
<div class="t" style="left:996.20px;top:449.00px;font-size:12px;line-height:18px;color:#333">30 sec</div>
<div class="t" style="left:1042.60px;top:449.00px;font-size:12px;line-height:18px;color:#333">5 min</div>
<div class="t" style="left:1083.60px;top:449.00px;font-size:12px;line-height:18px;color:#333">1 hr</div>
<svg class="abs" style="left:1115px;top:450.5px" width="11.5" height="11.5" viewBox="0 0 12 12"><path d="M2.3,0 L6,3.7 L9.7,0 L12,2.3 L8.3,6 L12,9.7 L9.7,12 L6,8.3 L2.3,12 L0,9.7 L3.7,6 L0,2.3 Z" fill="#222"/></svg>
<svg class="abs" style="left:158.00px;top:473.00px" width="467.0" height="150" viewBox="0 0 467.0 150"><defs><clipPath id="cp1"><rect x="40.00" y="8.00" width="420.00" height="135.10"/></clipPath></defs><path d="M112.50,8.00 V142.00 M184.50,8.00 V142.00 M256.50,8.00 V142.00 M328.50,8.00 V142.00 M401.50,8.00 V142.00 M40.00,115.50 H459.00 M40.00,88.50 H459.00 M40.00,61.50 H459.00 M40.00,34.50 H459.00" stroke="rgba(0,0,0,0.14)" stroke-width="1" fill="none" shape-rendering="crispEdges"/><rect x="39.00" y="7.00" width="421.00" height="136.00" fill="none" stroke="#454545" stroke-width="2"/><g clip-path="url(#cp1)"><path d="M54.45,142.00 L55.48,141.78 L56.51,141.56 L57.54,141.36 L58.58,141.17 L59.61,141.02 L60.64,140.90 L61.67,140.82 L62.70,140.79 L63.74,140.81 L64.77,140.90 L65.80,141.05 L66.83,141.28 L67.86,141.60 L68.90,142.00 L68.90,142.00 M83.34,142.00 L83.34,142.00 L84.38,140.25 L85.41,138.18 L86.44,135.87 L87.47,133.39 L88.50,130.80 L89.54,128.18 L90.57,125.61 L91.60,123.15 L92.63,120.86 L93.67,118.83 L94.70,117.13 L95.73,115.82 L96.76,114.97 L97.79,114.66 L98.83,114.94 L99.86,115.75 L100.89,117.03 L101.92,118.71 L102.95,120.72 L103.99,122.98 L105.02,125.43 L106.05,128.00 L107.08,130.62 L108.11,133.22 L109.15,135.73 L110.18,138.07 L111.21,140.19 L112.24,142.00 L112.24,142.00 M126.69,142.00 L126.69,142.00 L127.72,141.34 L128.75,140.72 L129.79,140.17 L130.82,139.70 L131.85,139.32 L132.88,139.04 L133.91,138.87 L134.95,138.83 L135.98,138.94 L137.01,139.19 L138.04,139.61 L139.07,140.21 L140.11,141.00 L141.14,142.00 L141.14,142.00 M155.59,142.00 L155.59,142.00 L156.62,137.85 L157.65,132.97 L158.68,127.51 L159.71,121.65 L160.75,115.56 L161.78,109.39 L162.81,103.33 L163.84,97.53 L164.87,92.16 L165.91,87.39 L166.94,83.40 L167.97,80.33 L169.00,78.37 L170.03,77.68 L171.07,78.37 L172.10,80.33 L173.13,83.39 L174.16,87.39 L175.19,92.16 L176.23,97.53 L177.26,103.33 L178.29,109.39 L179.32,115.56 L180.35,121.65 L181.39,127.51 L182.42,132.97 L183.45,137.85 L184.48,142.00 L184.48,142.00 M198.93,142.00 L198.93,142.00 L199.96,141.00 L201.00,140.21 L202.03,139.61 L203.06,139.19 L204.09,138.93 L205.12,138.83 L206.16,138.86 L207.19,139.03 L208.22,139.31 L209.25,139.69 L210.28,140.16 L211.32,140.72 L212.35,141.33 L213.38,142.00 L213.38,142.00 M227.83,142.00 L227.83,142.00 L228.86,140.17 L229.89,138.03 L230.92,135.66 L231.96,133.13 L232.99,130.51 L234.02,127.87 L235.05,125.29 L236.08,122.83 L237.12,120.56 L238.15,118.56 L239.18,116.90 L240.21,115.65 L241.24,114.88 L242.28,114.66 L243.31,115.05 L244.34,115.97 L245.37,117.37 L246.40,119.17 L247.44,121.28 L248.47,123.63 L249.50,126.15 L250.53,128.76 L251.56,131.38 L252.60,133.94 L253.63,136.36 L254.66,138.56 L255.69,140.46 L256.72,142.00 L256.72,142.00 M267.47,142.00 L268.08,141.81 L269.11,141.64 L270.14,141.69 L271.17,142.00 L271.17,142.00 M285.62,142.00 L285.62,142.00 L286.65,138.41 L287.68,134.12 L288.72,129.26 L289.75,123.98 L290.78,118.40 L291.81,112.68 L292.84,106.94 L293.88,101.34 L294.91,96.00 L295.94,91.08 L296.97,86.69 L298.00,83.00 L299.04,80.12 L300.07,78.22 L301.10,77.36 L302.13,77.43 L303.17,78.25 L304.20,79.66 L305.23,81.47 L306.26,83.51 L307.29,85.61 L308.33,87.60 L309.36,89.30 L310.39,90.53 L311.42,91.12 L312.45,90.90 L313.49,89.69 L314.52,87.33 L315.55,83.70 L316.58,78.97 L317.61,73.39 L318.65,67.20 L319.68,60.64 L320.71,53.95 L321.74,47.36 L322.77,41.13 L323.81,35.49 L324.84,30.69 L325.87,26.96 L326.90,24.54 L327.93,23.68 L328.97,24.62 L330.00,27.51 L331.03,32.20 L332.06,38.45 L333.09,46.03 L334.13,54.69 L335.16,64.19 L336.19,74.30 L337.22,84.77 L338.25,95.38 L339.29,105.88 L340.32,116.02 L341.35,125.59 L342.38,134.33 L343.41,142.00 L343.41,142.00 M357.86,142.00 L357.86,142.00 L358.89,136.79 L359.93,131.28 L360.96,125.57 L361.99,119.78 L363.02,114.03 L364.05,108.44 L365.09,103.11 L366.12,98.17 L367.15,93.72 L368.18,89.90 L369.21,86.80 L370.25,84.55 L371.28,83.25 L372.31,83.04 L373.34,83.96 L374.37,85.88 L375.41,88.60 L376.44,91.91 L377.47,95.61 L378.50,99.52 L379.53,103.43 L380.57,107.14 L381.60,110.45 L382.63,113.17 L383.66,115.09 L384.69,116.03 L385.73,115.77 L386.76,114.13 L387.79,110.97 L388.82,106.43 L389.85,100.75 L390.89,94.12 L391.92,86.78 L392.95,78.93 L393.98,70.80 L395.01,62.60 L396.05,54.55 L397.08,46.86 L398.11,39.75 L399.14,33.44 L400.17,28.14 L401.21,24.08 L402.24,21.41 L403.27,20.04 L404.30,19.84 L405.33,20.66 L406.37,22.37 L407.40,24.81 L408.43,27.86 L409.46,31.37 L410.50,35.19 L411.53,39.18 L412.56,43.22 L413.59,47.14 L414.62,50.81 L415.66,54.10 L416.69,56.87 L417.72,59.14 L418.75,60.92 L419.78,62.22 L420.82,63.08 L421.85,63.52 L422.88,63.54 L423.91,63.18 L424.94,62.45 L425.98,61.39 L427.01,60.00 L428.04,58.30 L429.07,56.33 L430.10,54.10 L431.14,51.63 L432.17,48.98 L433.20,46.19 L434.23,43.33 L435.26,40.44 L436.30,37.57 L437.33,34.78 L438.36,32.13 L439.39,29.66 L440.42,27.43 L441.46,25.48 L442.49,23.89 L443.52,22.69 L444.55,21.94 L445.58,21.67 L446.62,21.88 L447.65,22.51 L448.68,23.54 L449.71,24.93 L450.74,26.64 L451.78,28.64 L452.81,30.89 L453.84,33.36 L454.87,36.00 L455.90,38.79 L456.94,41.69 L457.97,44.66 L459.00,47.66" transform="translate(1,2)" stroke="rgba(0,0,0,0.13)" stroke-width="2.4" fill="none" stroke-linejoin="round"/><path d="M54.45,142.00 L55.48,141.78 L56.51,141.56 L57.54,141.36 L58.58,141.17 L59.61,141.02 L60.64,140.90 L61.67,140.82 L62.70,140.79 L63.74,140.81 L64.77,140.90 L65.80,141.05 L66.83,141.28 L67.86,141.60 L68.90,142.00 L68.90,142.00 M83.34,142.00 L83.34,142.00 L84.38,140.25 L85.41,138.18 L86.44,135.87 L87.47,133.39 L88.50,130.80 L89.54,128.18 L90.57,125.61 L91.60,123.15 L92.63,120.86 L93.67,118.83 L94.70,117.13 L95.73,115.82 L96.76,114.97 L97.79,114.66 L98.83,114.94 L99.86,115.75 L100.89,117.03 L101.92,118.71 L102.95,120.72 L103.99,122.98 L105.02,125.43 L106.05,128.00 L107.08,130.62 L108.11,133.22 L109.15,135.73 L110.18,138.07 L111.21,140.19 L112.24,142.00 L112.24,142.00 M126.69,142.00 L126.69,142.00 L127.72,141.34 L128.75,140.72 L129.79,140.17 L130.82,139.70 L131.85,139.32 L132.88,139.04 L133.91,138.87 L134.95,138.83 L135.98,138.94 L137.01,139.19 L138.04,139.61 L139.07,140.21 L140.11,141.00 L141.14,142.00 L141.14,142.00 M155.59,142.00 L155.59,142.00 L156.62,137.85 L157.65,132.97 L158.68,127.51 L159.71,121.65 L160.75,115.56 L161.78,109.39 L162.81,103.33 L163.84,97.53 L164.87,92.16 L165.91,87.39 L166.94,83.40 L167.97,80.33 L169.00,78.37 L170.03,77.68 L171.07,78.37 L172.10,80.33 L173.13,83.39 L174.16,87.39 L175.19,92.16 L176.23,97.53 L177.26,103.33 L178.29,109.39 L179.32,115.56 L180.35,121.65 L181.39,127.51 L182.42,132.97 L183.45,137.85 L184.48,142.00 L184.48,142.00 M198.93,142.00 L198.93,142.00 L199.96,141.00 L201.00,140.21 L202.03,139.61 L203.06,139.19 L204.09,138.93 L205.12,138.83 L206.16,138.86 L207.19,139.03 L208.22,139.31 L209.25,139.69 L210.28,140.16 L211.32,140.72 L212.35,141.33 L213.38,142.00 L213.38,142.00 M227.83,142.00 L227.83,142.00 L228.86,140.17 L229.89,138.03 L230.92,135.66 L231.96,133.13 L232.99,130.51 L234.02,127.87 L235.05,125.29 L236.08,122.83 L237.12,120.56 L238.15,118.56 L239.18,116.90 L240.21,115.65 L241.24,114.88 L242.28,114.66 L243.31,115.05 L244.34,115.97 L245.37,117.37 L246.40,119.17 L247.44,121.28 L248.47,123.63 L249.50,126.15 L250.53,128.76 L251.56,131.38 L252.60,133.94 L253.63,136.36 L254.66,138.56 L255.69,140.46 L256.72,142.00 L256.72,142.00 M267.47,142.00 L268.08,141.81 L269.11,141.64 L270.14,141.69 L271.17,142.00 L271.17,142.00 M285.62,142.00 L285.62,142.00 L286.65,138.41 L287.68,134.12 L288.72,129.26 L289.75,123.98 L290.78,118.40 L291.81,112.68 L292.84,106.94 L293.88,101.34 L294.91,96.00 L295.94,91.08 L296.97,86.69 L298.00,83.00 L299.04,80.12 L300.07,78.22 L301.10,77.36 L302.13,77.43 L303.17,78.25 L304.20,79.66 L305.23,81.47 L306.26,83.51 L307.29,85.61 L308.33,87.60 L309.36,89.30 L310.39,90.53 L311.42,91.12 L312.45,90.90 L313.49,89.69 L314.52,87.33 L315.55,83.70 L316.58,78.97 L317.61,73.39 L318.65,67.20 L319.68,60.64 L320.71,53.95 L321.74,47.36 L322.77,41.13 L323.81,35.49 L324.84,30.69 L325.87,26.96 L326.90,24.54 L327.93,23.68 L328.97,24.62 L330.00,27.51 L331.03,32.20 L332.06,38.45 L333.09,46.03 L334.13,54.69 L335.16,64.19 L336.19,74.30 L337.22,84.77 L338.25,95.38 L339.29,105.88 L340.32,116.02 L341.35,125.59 L342.38,134.33 L343.41,142.00 L343.41,142.00 M357.86,142.00 L357.86,142.00 L358.89,136.79 L359.93,131.28 L360.96,125.57 L361.99,119.78 L363.02,114.03 L364.05,108.44 L365.09,103.11 L366.12,98.17 L367.15,93.72 L368.18,89.90 L369.21,86.80 L370.25,84.55 L371.28,83.25 L372.31,83.04 L373.34,83.96 L374.37,85.88 L375.41,88.60 L376.44,91.91 L377.47,95.61 L378.50,99.52 L379.53,103.43 L380.57,107.14 L381.60,110.45 L382.63,113.17 L383.66,115.09 L384.69,116.03 L385.73,115.77 L386.76,114.13 L387.79,110.97 L388.82,106.43 L389.85,100.75 L390.89,94.12 L391.92,86.78 L392.95,78.93 L393.98,70.80 L395.01,62.60 L396.05,54.55 L397.08,46.86 L398.11,39.75 L399.14,33.44 L400.17,28.14 L401.21,24.08 L402.24,21.41 L403.27,20.04 L404.30,19.84 L405.33,20.66 L406.37,22.37 L407.40,24.81 L408.43,27.86 L409.46,31.37 L410.50,35.19 L411.53,39.18 L412.56,43.22 L413.59,47.14 L414.62,50.81 L415.66,54.10 L416.69,56.87 L417.72,59.14 L418.75,60.92 L419.78,62.22 L420.82,63.08 L421.85,63.52 L422.88,63.54 L423.91,63.18 L424.94,62.45 L425.98,61.39 L427.01,60.00 L428.04,58.30 L429.07,56.33 L430.10,54.10 L431.14,51.63 L432.17,48.98 L433.20,46.19 L434.23,43.33 L435.26,40.44 L436.30,37.57 L437.33,34.78 L438.36,32.13 L439.39,29.66 L440.42,27.43 L441.46,25.48 L442.49,23.89 L443.52,22.69 L444.55,21.94 L445.58,21.67 L446.62,21.88 L447.65,22.51 L448.68,23.54 L449.71,24.93 L450.74,26.64 L451.78,28.64 L452.81,30.89 L453.84,33.36 L454.87,36.00 L455.90,38.79 L456.94,41.69 L457.97,44.66 L459.00,47.66" stroke="#ff0000" stroke-width="2.1" fill="none" stroke-linejoin="round"/></g><g clip-path="url(#cp1)"><path d="M54.45,142.00 L55.48,137.98 L56.51,134.01 L57.54,130.13 L58.58,126.39 L59.61,122.84 L60.64,119.52 L61.67,116.48 L62.70,113.77 L63.74,111.43 L64.77,109.51 L65.80,108.05 L66.83,107.11 L67.86,106.72 L68.90,106.95 L69.93,107.80 L70.96,109.22 L71.99,111.14 L73.02,113.47 L74.06,116.14 L75.09,119.05 L76.12,122.15 L77.15,125.34 L78.18,128.54 L79.22,131.68 L80.25,134.67 L81.28,137.45 L82.31,139.91 L83.34,142.00 L83.34,142.00 M97.79,142.00 L97.79,142.00 L98.83,141.56 L99.86,141.23 L100.89,141.01 L101.92,140.87 L102.95,140.81 L103.99,140.82 L105.02,140.89 L106.05,141.00 L107.08,141.15 L108.11,141.32 L109.15,141.50 L110.18,141.68 L111.21,141.85 L112.24,142.00 L112.24,142.00 M126.69,142.00 L126.69,142.00 L127.72,141.97 L128.75,141.95 L129.79,141.94 L130.82,141.93 L131.85,141.93 L132.88,141.94 L133.91,141.94 L134.95,141.95 L135.98,141.96 L137.01,141.97 L138.04,141.98 L139.07,141.99 L140.11,142.00 L141.14,142.00 L142.17,142.00 L143.20,141.99 L144.23,141.98 L145.27,141.97 L146.30,141.96 L147.33,141.95 L148.36,141.94 L149.39,141.93 L150.43,141.92 L151.46,141.93 L152.49,141.93 L153.52,141.95 L154.55,141.97 L155.59,142.00 L155.59,142.00 M170.03,142.00 L170.03,142.00 L171.07,141.84 L172.10,141.66 L173.13,141.46 L174.16,141.27 L175.19,141.08 L176.23,140.93 L177.26,140.80 L178.29,140.73 L179.32,140.72 L180.35,140.78 L181.39,140.93 L182.42,141.17 L183.45,141.53 L184.48,142.00 L184.48,142.00 M198.93,142.00 L198.93,142.00 L199.96,139.75 L201.00,137.10 L202.03,134.13 L203.06,130.94 L204.09,127.62 L205.12,124.25 L206.16,120.94 L207.19,117.78 L208.22,114.85 L209.25,112.25 L210.28,110.06 L211.32,108.39 L212.35,107.32 L213.38,106.95 L214.41,107.33 L215.44,108.40 L216.48,110.08 L217.51,112.27 L218.54,114.87 L219.57,117.81 L220.60,120.97 L221.64,124.28 L222.67,127.65 L223.70,130.97 L224.73,134.15 L225.76,137.12 L226.80,139.76 L227.83,142.00 L227.83,142.00 M242.28,142.00 L243.31,141.57 L244.34,141.26 L245.37,141.07 L246.40,140.97 L247.44,140.96 L248.47,141.01 L249.50,141.12 L250.53,141.26 L251.56,141.42 L252.60,141.58 L253.63,141.74 L254.66,141.87 L255.69,141.96 L256.72,142.00 L257.76,141.97 L258.79,141.89 L259.82,141.76 L260.85,141.61 L261.88,141.45 L262.92,141.29 L263.95,141.15 L264.98,141.05 L266.01,141.00 L267.04,141.01 L268.08,141.10 L269.11,141.29 L270.14,141.58 L271.17,142.00 L271.17,142.00 M285.62,142.00 L285.62,142.00 L286.65,139.82 L287.68,137.25 L288.72,134.39 L289.75,131.34 L290.78,128.19 L291.81,125.05 L292.84,122.02 L293.88,119.19 L294.91,116.66 L295.94,114.53 L296.97,112.89 L298.00,111.86 L299.04,111.53 L300.07,111.98 L301.10,113.29 L302.13,115.35 L303.17,117.99 L304.20,121.06 L305.23,124.42 L306.26,127.90 L307.29,131.36 L308.33,134.64 L309.36,137.59 L310.39,140.05 L311.42,141.88 L311.54,142.00 M314.52,142.00 L314.52,142.00 L315.55,139.80 L316.58,136.54 L317.61,132.42 L318.65,127.62 L319.68,122.35 L320.71,116.78 L321.74,111.12 L322.77,105.55 L323.81,100.27 L324.84,95.47 L325.87,91.34 L326.90,88.08 L327.93,85.87 L328.97,84.92 L330.00,85.34 L331.03,87.03 L332.06,89.81 L333.09,93.50 L334.13,97.94 L335.16,102.93 L336.19,108.31 L337.22,113.90 L338.25,119.52 L339.29,125.01 L340.32,130.17 L341.35,134.84 L342.38,138.84 L343.41,142.00 L343.41,142.00 M349.70,142.00 L350.64,139.78 L351.67,136.80 L352.70,133.37 L353.73,129.57 L354.77,125.46 L355.80,121.11 L356.83,116.59 L357.86,111.98 L358.89,107.36 L359.93,102.79 L360.96,98.36 L361.99,94.15 L363.02,90.24 L364.05,86.71 L365.09,83.65 L366.12,81.13 L367.15,79.24 L368.18,78.05 L369.21,77.64 L370.25,78.11 L371.28,79.52 L372.31,81.97 L373.34,85.47 L374.37,89.89 L375.41,95.03 L376.44,100.68 L377.47,106.64 L378.50,112.73 L379.53,118.74 L380.57,124.48 L381.60,129.74 L382.63,134.32 L383.66,138.04 L384.69,140.69 L385.67,142.00 M386.76,142.00 L386.76,142.00 L387.79,140.32 L388.82,137.18 L389.85,132.76 L390.89,127.26 L391.92,120.87 L392.95,113.78 L393.98,106.19 L395.01,98.28 L396.05,90.26 L397.08,82.32 L398.11,74.65 L399.14,67.43 L400.17,60.88 L401.21,55.17 L402.24,50.46 L403.27,46.72 L404.30,43.91 L405.33,41.94 L406.37,40.76 L407.40,40.31 L408.43,40.51 L409.46,41.32 L410.50,42.66 L411.53,44.47 L412.56,46.69 L413.59,49.26 L414.62,52.10 L415.66,55.17 L416.69,58.39 L417.72,61.70 L418.75,65.04 L419.78,68.34 L420.82,71.54 L421.85,74.57 L422.88,77.37 L423.91,79.88 L424.94,82.03 L425.98,83.77 L427.01,85.01 L428.04,85.70 L429.07,85.78 L430.10,85.18 L431.14,83.87 L432.17,81.94 L433.20,79.49 L434.23,76.65 L435.26,73.54 L436.30,70.27 L437.33,66.96 L438.36,63.73 L439.39,60.69 L440.42,57.96 L441.46,55.66 L442.49,53.90 L443.52,52.81 L444.55,52.49 L445.58,53.03 L446.62,54.41 L447.65,56.56 L448.68,59.41 L449.71,62.90 L450.74,66.96 L451.78,71.54 L452.81,76.56 L453.84,81.97 L454.87,87.69 L455.90,93.68 L456.94,99.85 L457.97,106.15 L459.00,112.52" transform="translate(1,2)" stroke="rgba(0,0,0,0.13)" stroke-width="2.4" fill="none" stroke-linejoin="round"/><path d="M54.45,142.00 L55.48,137.98 L56.51,134.01 L57.54,130.13 L58.58,126.39 L59.61,122.84 L60.64,119.52 L61.67,116.48 L62.70,113.77 L63.74,111.43 L64.77,109.51 L65.80,108.05 L66.83,107.11 L67.86,106.72 L68.90,106.95 L69.93,107.80 L70.96,109.22 L71.99,111.14 L73.02,113.47 L74.06,116.14 L75.09,119.05 L76.12,122.15 L77.15,125.34 L78.18,128.54 L79.22,131.68 L80.25,134.67 L81.28,137.45 L82.31,139.91 L83.34,142.00 L83.34,142.00 M97.79,142.00 L97.79,142.00 L98.83,141.56 L99.86,141.23 L100.89,141.01 L101.92,140.87 L102.95,140.81 L103.99,140.82 L105.02,140.89 L106.05,141.00 L107.08,141.15 L108.11,141.32 L109.15,141.50 L110.18,141.68 L111.21,141.85 L112.24,142.00 L112.24,142.00 M126.69,142.00 L126.69,142.00 L127.72,141.97 L128.75,141.95 L129.79,141.94 L130.82,141.93 L131.85,141.93 L132.88,141.94 L133.91,141.94 L134.95,141.95 L135.98,141.96 L137.01,141.97 L138.04,141.98 L139.07,141.99 L140.11,142.00 L141.14,142.00 L142.17,142.00 L143.20,141.99 L144.23,141.98 L145.27,141.97 L146.30,141.96 L147.33,141.95 L148.36,141.94 L149.39,141.93 L150.43,141.92 L151.46,141.93 L152.49,141.93 L153.52,141.95 L154.55,141.97 L155.59,142.00 L155.59,142.00 M170.03,142.00 L170.03,142.00 L171.07,141.84 L172.10,141.66 L173.13,141.46 L174.16,141.27 L175.19,141.08 L176.23,140.93 L177.26,140.80 L178.29,140.73 L179.32,140.72 L180.35,140.78 L181.39,140.93 L182.42,141.17 L183.45,141.53 L184.48,142.00 L184.48,142.00 M198.93,142.00 L198.93,142.00 L199.96,139.75 L201.00,137.10 L202.03,134.13 L203.06,130.94 L204.09,127.62 L205.12,124.25 L206.16,120.94 L207.19,117.78 L208.22,114.85 L209.25,112.25 L210.28,110.06 L211.32,108.39 L212.35,107.32 L213.38,106.95 L214.41,107.33 L215.44,108.40 L216.48,110.08 L217.51,112.27 L218.54,114.87 L219.57,117.81 L220.60,120.97 L221.64,124.28 L222.67,127.65 L223.70,130.97 L224.73,134.15 L225.76,137.12 L226.80,139.76 L227.83,142.00 L227.83,142.00 M242.28,142.00 L243.31,141.57 L244.34,141.26 L245.37,141.07 L246.40,140.97 L247.44,140.96 L248.47,141.01 L249.50,141.12 L250.53,141.26 L251.56,141.42 L252.60,141.58 L253.63,141.74 L254.66,141.87 L255.69,141.96 L256.72,142.00 L257.76,141.97 L258.79,141.89 L259.82,141.76 L260.85,141.61 L261.88,141.45 L262.92,141.29 L263.95,141.15 L264.98,141.05 L266.01,141.00 L267.04,141.01 L268.08,141.10 L269.11,141.29 L270.14,141.58 L271.17,142.00 L271.17,142.00 M285.62,142.00 L285.62,142.00 L286.65,139.82 L287.68,137.25 L288.72,134.39 L289.75,131.34 L290.78,128.19 L291.81,125.05 L292.84,122.02 L293.88,119.19 L294.91,116.66 L295.94,114.53 L296.97,112.89 L298.00,111.86 L299.04,111.53 L300.07,111.98 L301.10,113.29 L302.13,115.35 L303.17,117.99 L304.20,121.06 L305.23,124.42 L306.26,127.90 L307.29,131.36 L308.33,134.64 L309.36,137.59 L310.39,140.05 L311.42,141.88 L311.54,142.00 M314.52,142.00 L314.52,142.00 L315.55,139.80 L316.58,136.54 L317.61,132.42 L318.65,127.62 L319.68,122.35 L320.71,116.78 L321.74,111.12 L322.77,105.55 L323.81,100.27 L324.84,95.47 L325.87,91.34 L326.90,88.08 L327.93,85.87 L328.97,84.92 L330.00,85.34 L331.03,87.03 L332.06,89.81 L333.09,93.50 L334.13,97.94 L335.16,102.93 L336.19,108.31 L337.22,113.90 L338.25,119.52 L339.29,125.01 L340.32,130.17 L341.35,134.84 L342.38,138.84 L343.41,142.00 L343.41,142.00 M349.70,142.00 L350.64,139.78 L351.67,136.80 L352.70,133.37 L353.73,129.57 L354.77,125.46 L355.80,121.11 L356.83,116.59 L357.86,111.98 L358.89,107.36 L359.93,102.79 L360.96,98.36 L361.99,94.15 L363.02,90.24 L364.05,86.71 L365.09,83.65 L366.12,81.13 L367.15,79.24 L368.18,78.05 L369.21,77.64 L370.25,78.11 L371.28,79.52 L372.31,81.97 L373.34,85.47 L374.37,89.89 L375.41,95.03 L376.44,100.68 L377.47,106.64 L378.50,112.73 L379.53,118.74 L380.57,124.48 L381.60,129.74 L382.63,134.32 L383.66,138.04 L384.69,140.69 L385.67,142.00 M386.76,142.00 L386.76,142.00 L387.79,140.32 L388.82,137.18 L389.85,132.76 L390.89,127.26 L391.92,120.87 L392.95,113.78 L393.98,106.19 L395.01,98.28 L396.05,90.26 L397.08,82.32 L398.11,74.65 L399.14,67.43 L400.17,60.88 L401.21,55.17 L402.24,50.46 L403.27,46.72 L404.30,43.91 L405.33,41.94 L406.37,40.76 L407.40,40.31 L408.43,40.51 L409.46,41.32 L410.50,42.66 L411.53,44.47 L412.56,46.69 L413.59,49.26 L414.62,52.10 L415.66,55.17 L416.69,58.39 L417.72,61.70 L418.75,65.04 L419.78,68.34 L420.82,71.54 L421.85,74.57 L422.88,77.37 L423.91,79.88 L424.94,82.03 L425.98,83.77 L427.01,85.01 L428.04,85.70 L429.07,85.78 L430.10,85.18 L431.14,83.87 L432.17,81.94 L433.20,79.49 L434.23,76.65 L435.26,73.54 L436.30,70.27 L437.33,66.96 L438.36,63.73 L439.39,60.69 L440.42,57.96 L441.46,55.66 L442.49,53.90 L443.52,52.81 L444.55,52.49 L445.58,53.03 L446.62,54.41 L447.65,56.56 L448.68,59.41 L449.71,62.90 L450.74,66.96 L451.78,71.54 L452.81,76.56 L453.84,81.97 L454.87,87.69 L455.90,93.68 L456.94,99.85 L457.97,106.15 L459.00,112.52" stroke="#0000ff" stroke-width="2.1" fill="none" stroke-linejoin="round"/></g><text x="34.60" y="146.20" text-anchor="end" font-family="Liberation Sans, sans-serif" font-size="11" fill="#444">Kbps</text><text x="34.60" y="119.40" text-anchor="end" font-family="Liberation Sans, sans-serif" font-size="11" fill="#444">0.5</text><text x="34.60" y="92.60" text-anchor="end" font-family="Liberation Sans, sans-serif" font-size="11" fill="#444">1</text><text x="34.60" y="65.80" text-anchor="end" font-family="Liberation Sans, sans-serif" font-size="11" fill="#444">1.5</text><text x="34.60" y="39.00" text-anchor="end" font-family="Liberation Sans, sans-serif" font-size="11" fill="#444">2</text><text x="34.60" y="12.20" text-anchor="end" font-family="Liberation Sans, sans-serif" font-size="11" fill="#444">2.5</text></svg>
<svg class="abs" style="left:641.00px;top:473.00px" width="474.0" height="150" viewBox="0 0 474.0 150"><defs><clipPath id="cp2"><rect x="40.00" y="8.00" width="427.00" height="135.10"/></clipPath></defs><path d="M113.50,8.00 V142.00 M186.50,8.00 V142.00 M260.50,8.00 V142.00 M333.50,8.00 V142.00 M407.50,8.00 V142.00 M40.00,115.50 H466.00 M40.00,88.50 H466.00 M40.00,61.50 H466.00 M40.00,34.50 H466.00" stroke="rgba(0,0,0,0.14)" stroke-width="1" fill="none" shape-rendering="crispEdges"/><rect x="39.00" y="7.00" width="428.00" height="136.00" fill="none" stroke="#454545" stroke-width="2"/><g clip-path="url(#cp2)"><path d="M54.69,142.00 L55.74,141.78 L56.79,141.57 L57.84,141.37 L58.89,141.19 L59.94,141.04 L60.99,140.92 L62.03,140.84 L63.08,140.81 L64.13,140.84 L65.18,140.92 L66.23,141.07 L67.28,141.30 L68.33,141.61 L69.38,142.00 L69.38,142.00 M84.07,142.00 L84.07,142.00 L85.12,140.28 L86.17,138.25 L87.22,135.99 L88.27,133.55 L89.32,131.02 L90.36,128.45 L91.41,125.92 L92.46,123.51 L93.51,121.27 L94.56,119.28 L95.61,117.61 L96.66,116.33 L97.71,115.50 L98.76,115.20 L99.81,115.47 L100.86,116.27 L101.91,117.53 L102.96,119.18 L104.00,121.15 L105.05,123.37 L106.10,125.78 L107.15,128.30 L108.20,130.87 L109.25,133.42 L110.30,135.87 L111.35,138.16 L112.40,140.23 L113.45,142.00 L113.45,142.00 M128.14,142.00 L128.14,142.00 L129.19,141.39 L130.24,140.84 L131.29,140.36 L132.33,139.95 L133.38,139.62 L134.43,139.39 L135.48,139.26 L136.53,139.24 L137.58,139.34 L138.63,139.58 L139.68,139.95 L140.73,140.47 L141.78,141.15 L142.83,142.00 L142.83,142.00 M157.52,142.00 L157.52,142.00 L158.57,138.54 L159.62,134.47 L160.67,129.92 L161.71,125.04 L162.76,119.96 L163.81,114.82 L164.86,109.77 L165.91,104.93 L166.96,100.46 L168.01,96.49 L169.06,93.16 L170.11,90.61 L171.16,88.98 L172.21,88.40 L173.26,88.98 L174.31,90.61 L175.35,93.16 L176.40,96.49 L177.45,100.46 L178.50,104.93 L179.55,109.77 L180.60,114.82 L181.65,119.96 L182.70,125.04 L183.75,129.92 L184.80,134.47 L185.85,138.54 L186.90,142.00 L186.90,142.00 M201.59,142.00 L201.59,142.00 L202.64,141.15 L203.68,140.47 L204.73,139.95 L205.78,139.57 L206.83,139.34 L207.88,139.23 L208.93,139.25 L209.98,139.38 L211.03,139.61 L212.08,139.94 L213.13,140.35 L214.18,140.84 L215.23,141.39 L216.28,142.00 M230.97,142.00 L230.97,142.00 L232.01,140.22 L233.06,138.13 L234.11,135.82 L235.16,133.34 L236.21,130.78 L237.26,128.19 L238.31,125.66 L239.36,123.25 L240.41,121.02 L241.46,119.06 L242.51,117.43 L243.56,116.19 L244.61,115.43 L245.66,115.20 L246.70,115.56 L247.75,116.46 L248.80,117.81 L249.85,119.56 L250.90,121.61 L251.95,123.91 L253.00,126.37 L254.05,128.92 L255.10,131.49 L256.15,134.00 L257.20,136.39 L258.25,138.56 L259.30,140.46 L260.34,142.00 L260.34,142.00 M272.36,142.00 L272.94,141.87 L273.99,141.82 L275.03,142.00 L275.03,142.00 M289.72,142.00 L290.77,139.09 L291.82,135.60 L292.87,131.64 L293.92,127.31 L294.97,122.73 L296.02,118.01 L297.07,113.26 L298.12,108.59 L299.17,104.11 L300.22,99.93 L301.27,96.15 L302.32,92.90 L303.36,90.28 L304.41,88.40 L305.46,87.33 L306.51,86.97 L307.56,87.19 L308.61,87.85 L309.66,88.81 L310.71,89.94 L311.76,91.09 L312.81,92.13 L313.86,92.93 L314.91,93.34 L315.96,93.23 L317.00,92.46 L318.05,90.90 L319.10,88.40 L320.15,84.89 L321.20,80.51 L322.25,75.47 L323.30,69.97 L324.35,64.22 L325.40,58.42 L326.45,52.77 L327.50,47.49 L328.55,42.77 L329.60,38.82 L330.65,35.84 L331.69,34.04 L332.74,33.63 L333.79,34.80 L334.84,37.69 L335.89,42.17 L336.94,48.01 L337.99,55.01 L339.04,62.95 L340.09,71.62 L341.14,80.82 L342.19,90.32 L343.24,99.93 L344.29,109.42 L345.33,118.58 L346.38,127.21 L347.43,135.08 L348.48,142.00 L348.48,142.00 M363.17,142.00 L363.17,142.00 L364.22,137.30 L365.27,132.33 L366.32,127.17 L367.37,121.95 L368.42,116.75 L369.47,111.69 L370.52,106.86 L371.57,102.38 L372.62,98.34 L373.67,94.84 L374.71,92.00 L375.76,89.91 L376.81,88.67 L377.86,88.40 L378.91,89.14 L379.96,90.77 L381.01,93.11 L382.06,95.98 L383.11,99.21 L384.16,102.62 L385.21,106.04 L386.26,109.28 L387.31,112.17 L388.35,114.53 L389.40,116.20 L390.45,116.98 L391.50,116.71 L392.55,115.20 L393.60,112.35 L394.65,108.28 L395.70,103.18 L396.75,97.26 L397.80,90.70 L398.85,83.69 L399.90,76.43 L400.95,69.12 L402.00,61.94 L403.04,55.08 L404.09,48.75 L405.14,43.13 L406.19,38.41 L407.24,34.80 L408.29,32.42 L409.34,31.21 L410.39,31.04 L411.44,31.79 L412.49,33.31 L413.54,35.50 L414.59,38.23 L415.64,41.35 L416.68,44.76 L417.73,48.33 L418.78,51.92 L419.83,55.41 L420.88,58.68 L421.93,61.60 L422.98,64.06 L424.03,66.07 L425.08,67.63 L426.13,68.78 L427.18,69.53 L428.23,69.90 L429.28,69.91 L430.33,69.59 L431.37,68.94 L432.42,67.99 L433.47,66.76 L434.52,65.28 L435.57,63.55 L436.62,61.60 L437.67,59.46 L438.72,57.16 L439.77,54.75 L440.82,52.29 L441.87,49.82 L442.92,47.38 L443.97,45.02 L445.01,42.79 L446.06,40.74 L447.11,38.92 L448.16,37.36 L449.21,36.13 L450.26,35.26 L451.31,34.80 L452.36,34.79 L453.41,35.21 L454.46,36.02 L455.51,37.20 L456.56,38.70 L457.61,40.50 L458.66,42.56 L459.70,44.85 L460.75,47.34 L461.80,50.00 L462.85,52.78 L463.90,55.67 L464.95,58.62 L466.00,61.60" transform="translate(1,2)" stroke="rgba(0,0,0,0.13)" stroke-width="2.4" fill="none" stroke-linejoin="round"/><path d="M54.69,142.00 L55.74,141.78 L56.79,141.57 L57.84,141.37 L58.89,141.19 L59.94,141.04 L60.99,140.92 L62.03,140.84 L63.08,140.81 L64.13,140.84 L65.18,140.92 L66.23,141.07 L67.28,141.30 L68.33,141.61 L69.38,142.00 L69.38,142.00 M84.07,142.00 L84.07,142.00 L85.12,140.28 L86.17,138.25 L87.22,135.99 L88.27,133.55 L89.32,131.02 L90.36,128.45 L91.41,125.92 L92.46,123.51 L93.51,121.27 L94.56,119.28 L95.61,117.61 L96.66,116.33 L97.71,115.50 L98.76,115.20 L99.81,115.47 L100.86,116.27 L101.91,117.53 L102.96,119.18 L104.00,121.15 L105.05,123.37 L106.10,125.78 L107.15,128.30 L108.20,130.87 L109.25,133.42 L110.30,135.87 L111.35,138.16 L112.40,140.23 L113.45,142.00 L113.45,142.00 M128.14,142.00 L128.14,142.00 L129.19,141.39 L130.24,140.84 L131.29,140.36 L132.33,139.95 L133.38,139.62 L134.43,139.39 L135.48,139.26 L136.53,139.24 L137.58,139.34 L138.63,139.58 L139.68,139.95 L140.73,140.47 L141.78,141.15 L142.83,142.00 L142.83,142.00 M157.52,142.00 L157.52,142.00 L158.57,138.54 L159.62,134.47 L160.67,129.92 L161.71,125.04 L162.76,119.96 L163.81,114.82 L164.86,109.77 L165.91,104.93 L166.96,100.46 L168.01,96.49 L169.06,93.16 L170.11,90.61 L171.16,88.98 L172.21,88.40 L173.26,88.98 L174.31,90.61 L175.35,93.16 L176.40,96.49 L177.45,100.46 L178.50,104.93 L179.55,109.77 L180.60,114.82 L181.65,119.96 L182.70,125.04 L183.75,129.92 L184.80,134.47 L185.85,138.54 L186.90,142.00 L186.90,142.00 M201.59,142.00 L201.59,142.00 L202.64,141.15 L203.68,140.47 L204.73,139.95 L205.78,139.57 L206.83,139.34 L207.88,139.23 L208.93,139.25 L209.98,139.38 L211.03,139.61 L212.08,139.94 L213.13,140.35 L214.18,140.84 L215.23,141.39 L216.28,142.00 M230.97,142.00 L230.97,142.00 L232.01,140.22 L233.06,138.13 L234.11,135.82 L235.16,133.34 L236.21,130.78 L237.26,128.19 L238.31,125.66 L239.36,123.25 L240.41,121.02 L241.46,119.06 L242.51,117.43 L243.56,116.19 L244.61,115.43 L245.66,115.20 L246.70,115.56 L247.75,116.46 L248.80,117.81 L249.85,119.56 L250.90,121.61 L251.95,123.91 L253.00,126.37 L254.05,128.92 L255.10,131.49 L256.15,134.00 L257.20,136.39 L258.25,138.56 L259.30,140.46 L260.34,142.00 L260.34,142.00 M272.36,142.00 L272.94,141.87 L273.99,141.82 L275.03,142.00 L275.03,142.00 M289.72,142.00 L290.77,139.09 L291.82,135.60 L292.87,131.64 L293.92,127.31 L294.97,122.73 L296.02,118.01 L297.07,113.26 L298.12,108.59 L299.17,104.11 L300.22,99.93 L301.27,96.15 L302.32,92.90 L303.36,90.28 L304.41,88.40 L305.46,87.33 L306.51,86.97 L307.56,87.19 L308.61,87.85 L309.66,88.81 L310.71,89.94 L311.76,91.09 L312.81,92.13 L313.86,92.93 L314.91,93.34 L315.96,93.23 L317.00,92.46 L318.05,90.90 L319.10,88.40 L320.15,84.89 L321.20,80.51 L322.25,75.47 L323.30,69.97 L324.35,64.22 L325.40,58.42 L326.45,52.77 L327.50,47.49 L328.55,42.77 L329.60,38.82 L330.65,35.84 L331.69,34.04 L332.74,33.63 L333.79,34.80 L334.84,37.69 L335.89,42.17 L336.94,48.01 L337.99,55.01 L339.04,62.95 L340.09,71.62 L341.14,80.82 L342.19,90.32 L343.24,99.93 L344.29,109.42 L345.33,118.58 L346.38,127.21 L347.43,135.08 L348.48,142.00 L348.48,142.00 M363.17,142.00 L363.17,142.00 L364.22,137.30 L365.27,132.33 L366.32,127.17 L367.37,121.95 L368.42,116.75 L369.47,111.69 L370.52,106.86 L371.57,102.38 L372.62,98.34 L373.67,94.84 L374.71,92.00 L375.76,89.91 L376.81,88.67 L377.86,88.40 L378.91,89.14 L379.96,90.77 L381.01,93.11 L382.06,95.98 L383.11,99.21 L384.16,102.62 L385.21,106.04 L386.26,109.28 L387.31,112.17 L388.35,114.53 L389.40,116.20 L390.45,116.98 L391.50,116.71 L392.55,115.20 L393.60,112.35 L394.65,108.28 L395.70,103.18 L396.75,97.26 L397.80,90.70 L398.85,83.69 L399.90,76.43 L400.95,69.12 L402.00,61.94 L403.04,55.08 L404.09,48.75 L405.14,43.13 L406.19,38.41 L407.24,34.80 L408.29,32.42 L409.34,31.21 L410.39,31.04 L411.44,31.79 L412.49,33.31 L413.54,35.50 L414.59,38.23 L415.64,41.35 L416.68,44.76 L417.73,48.33 L418.78,51.92 L419.83,55.41 L420.88,58.68 L421.93,61.60 L422.98,64.06 L424.03,66.07 L425.08,67.63 L426.13,68.78 L427.18,69.53 L428.23,69.90 L429.28,69.91 L430.33,69.59 L431.37,68.94 L432.42,67.99 L433.47,66.76 L434.52,65.28 L435.57,63.55 L436.62,61.60 L437.67,59.46 L438.72,57.16 L439.77,54.75 L440.82,52.29 L441.87,49.82 L442.92,47.38 L443.97,45.02 L445.01,42.79 L446.06,40.74 L447.11,38.92 L448.16,37.36 L449.21,36.13 L450.26,35.26 L451.31,34.80 L452.36,34.79 L453.41,35.21 L454.46,36.02 L455.51,37.20 L456.56,38.70 L457.61,40.50 L458.66,42.56 L459.70,44.85 L460.75,47.34 L461.80,50.00 L462.85,52.78 L463.90,55.67 L464.95,58.62 L466.00,61.60" stroke="#ff0000" stroke-width="2.1" fill="none" stroke-linejoin="round"/></g><g clip-path="url(#cp2)"><path d="M54.69,142.00 L55.74,138.93 L56.79,135.89 L57.84,132.93 L58.89,130.07 L59.94,127.35 L60.99,124.82 L62.03,122.49 L63.08,120.42 L64.13,118.63 L65.18,117.16 L66.23,116.05 L67.28,115.32 L68.33,115.03 L69.38,115.20 L70.43,115.85 L71.48,116.94 L72.53,118.41 L73.58,120.19 L74.63,122.23 L75.67,124.46 L76.72,126.82 L77.77,129.26 L78.82,131.71 L79.87,134.11 L80.92,136.40 L81.97,138.52 L83.02,140.41 L84.07,142.00 L84.07,142.00 M98.76,142.00 L98.76,142.00 L99.81,141.66 L100.86,141.41 L101.91,141.24 L102.96,141.14 L104.00,141.09 L105.05,141.10 L106.10,141.15 L107.15,141.24 L108.20,141.35 L109.25,141.48 L110.30,141.62 L111.35,141.76 L112.40,141.89 L113.45,142.00 L113.45,142.00 M128.14,142.00 L128.14,142.00 L129.19,141.98 L130.24,141.96 L131.29,141.95 L132.33,141.95 L133.38,141.95 L134.43,141.95 L135.48,141.96 L136.53,141.96 L137.58,141.97 L138.63,141.98 L139.68,141.99 L140.73,141.99 L141.78,142.00 L142.83,142.00 L143.88,142.00 L144.93,141.99 L145.98,141.98 L147.02,141.98 L148.07,141.97 L149.12,141.96 L150.17,141.95 L151.22,141.95 L152.27,141.94 L153.32,141.94 L154.37,141.95 L155.42,141.96 L156.47,141.98 L157.52,142.00 L157.52,142.00 M172.21,142.00 L172.21,142.00 L173.26,141.88 L174.31,141.74 L175.35,141.59 L176.40,141.44 L177.45,141.30 L178.50,141.18 L179.55,141.09 L180.60,141.03 L181.65,141.02 L182.70,141.07 L183.75,141.18 L184.80,141.37 L185.85,141.64 L186.90,142.00 L186.90,142.00 M201.59,142.00 L201.59,142.00 L202.64,140.28 L203.68,138.25 L204.73,135.98 L205.78,133.54 L206.83,131.00 L207.88,128.43 L208.93,125.90 L209.98,123.48 L211.03,121.24 L212.08,119.25 L213.13,117.58 L214.18,116.30 L215.23,115.49 L216.28,115.20 L217.33,115.49 L218.37,116.31 L219.42,117.60 L220.47,119.27 L221.52,121.26 L222.57,123.51 L223.62,125.93 L224.67,128.46 L225.72,131.03 L226.77,133.57 L227.82,136.00 L228.87,138.27 L229.92,140.29 L230.97,142.00 L230.97,142.00 M245.66,142.00 L245.66,142.00 L246.70,141.67 L247.75,141.45 L248.80,141.31 L249.85,141.24 L250.90,141.24 L251.95,141.28 L253.00,141.37 L254.05,141.48 L255.10,141.60 L256.15,141.72 L257.20,141.84 L258.25,141.93 L259.30,141.99 L260.34,142.00 L261.39,141.96 L262.44,141.87 L263.49,141.75 L264.54,141.61 L265.59,141.46 L266.64,141.32 L267.69,141.20 L268.74,141.11 L269.79,141.07 L270.84,141.08 L271.89,141.17 L272.94,141.35 L273.99,141.62 L275.03,142.00 L275.03,142.00 M289.72,142.00 L289.72,142.00 L290.77,140.04 L291.82,137.73 L292.87,135.16 L293.92,132.42 L294.97,129.60 L296.02,126.79 L297.07,124.07 L298.12,121.53 L299.17,119.27 L300.22,117.38 L301.27,115.93 L302.32,115.03 L303.36,114.75 L304.41,115.20 L305.46,116.42 L306.51,118.30 L307.56,120.71 L308.61,123.51 L309.66,126.56 L310.71,129.71 L311.76,132.83 L312.81,135.78 L313.86,138.42 L314.91,140.60 L315.83,142.00 M319.10,142.00 L319.10,142.00 L320.15,139.87 L321.20,136.76 L322.25,132.86 L323.30,128.34 L324.35,123.37 L325.40,118.15 L326.45,112.85 L327.50,107.64 L328.55,102.70 L329.60,98.22 L330.65,94.37 L331.69,91.33 L332.74,89.28 L333.79,88.40 L334.84,88.81 L335.89,90.40 L336.94,93.00 L337.99,96.46 L339.04,100.61 L340.09,105.29 L341.14,110.33 L342.19,115.57 L343.24,120.85 L344.29,125.99 L345.33,130.84 L346.38,135.24 L347.43,139.01 L348.48,142.00 L348.48,142.00 M355.05,142.00 L355.83,140.37 L356.88,137.68 L357.93,134.58 L358.98,131.13 L360.02,127.40 L361.07,123.46 L362.12,119.37 L363.17,115.20 L364.22,111.02 L365.27,106.90 L366.32,102.92 L367.37,99.13 L368.42,95.63 L369.47,92.47 L370.52,89.73 L371.57,87.49 L372.62,85.81 L373.67,84.76 L374.71,84.43 L375.76,84.88 L376.81,86.18 L377.86,88.40 L378.91,91.58 L379.96,95.58 L381.01,100.21 L382.06,105.31 L383.11,110.68 L384.16,116.16 L385.21,121.55 L386.26,126.69 L387.31,131.38 L388.35,135.46 L389.40,138.74 L390.45,141.04 L391.33,142.00 M392.55,142.00 L392.55,142.00 L393.60,140.35 L394.65,137.37 L395.70,133.22 L396.75,128.09 L397.80,122.15 L398.85,115.59 L399.90,108.56 L400.95,101.27 L402.00,93.87 L403.04,86.55 L404.09,79.49 L405.14,72.86 L406.19,66.84 L407.24,61.60 L408.29,57.29 L409.34,53.88 L410.39,51.32 L411.44,49.54 L412.49,48.48 L413.54,48.08 L414.59,48.29 L415.64,49.04 L416.68,50.28 L417.73,51.94 L418.78,53.96 L419.83,56.28 L420.88,58.85 L421.93,61.60 L422.98,64.47 L424.03,67.42 L425.08,70.37 L426.13,73.29 L427.18,76.12 L428.23,78.79 L429.28,81.27 L430.33,83.49 L431.37,85.39 L432.42,86.94 L433.47,88.07 L434.52,88.72 L435.57,88.85 L436.62,88.40 L437.67,87.34 L438.72,85.75 L439.77,83.72 L440.82,81.36 L441.87,78.77 L442.92,76.04 L443.97,73.29 L445.01,70.61 L446.06,68.09 L447.11,65.85 L448.16,63.98 L449.21,62.58 L450.26,61.75 L451.31,61.60 L452.36,62.19 L453.41,63.51 L454.46,65.48 L455.51,68.07 L456.56,71.21 L457.61,74.84 L458.66,78.92 L459.70,83.38 L460.75,88.18 L461.80,93.25 L462.85,98.55 L463.90,104.01 L464.95,109.57 L466.00,115.20" transform="translate(1,2)" stroke="rgba(0,0,0,0.13)" stroke-width="2.4" fill="none" stroke-linejoin="round"/><path d="M54.69,142.00 L55.74,138.93 L56.79,135.89 L57.84,132.93 L58.89,130.07 L59.94,127.35 L60.99,124.82 L62.03,122.49 L63.08,120.42 L64.13,118.63 L65.18,117.16 L66.23,116.05 L67.28,115.32 L68.33,115.03 L69.38,115.20 L70.43,115.85 L71.48,116.94 L72.53,118.41 L73.58,120.19 L74.63,122.23 L75.67,124.46 L76.72,126.82 L77.77,129.26 L78.82,131.71 L79.87,134.11 L80.92,136.40 L81.97,138.52 L83.02,140.41 L84.07,142.00 L84.07,142.00 M98.76,142.00 L98.76,142.00 L99.81,141.66 L100.86,141.41 L101.91,141.24 L102.96,141.14 L104.00,141.09 L105.05,141.10 L106.10,141.15 L107.15,141.24 L108.20,141.35 L109.25,141.48 L110.30,141.62 L111.35,141.76 L112.40,141.89 L113.45,142.00 L113.45,142.00 M128.14,142.00 L128.14,142.00 L129.19,141.98 L130.24,141.96 L131.29,141.95 L132.33,141.95 L133.38,141.95 L134.43,141.95 L135.48,141.96 L136.53,141.96 L137.58,141.97 L138.63,141.98 L139.68,141.99 L140.73,141.99 L141.78,142.00 L142.83,142.00 L143.88,142.00 L144.93,141.99 L145.98,141.98 L147.02,141.98 L148.07,141.97 L149.12,141.96 L150.17,141.95 L151.22,141.95 L152.27,141.94 L153.32,141.94 L154.37,141.95 L155.42,141.96 L156.47,141.98 L157.52,142.00 L157.52,142.00 M172.21,142.00 L172.21,142.00 L173.26,141.88 L174.31,141.74 L175.35,141.59 L176.40,141.44 L177.45,141.30 L178.50,141.18 L179.55,141.09 L180.60,141.03 L181.65,141.02 L182.70,141.07 L183.75,141.18 L184.80,141.37 L185.85,141.64 L186.90,142.00 L186.90,142.00 M201.59,142.00 L201.59,142.00 L202.64,140.28 L203.68,138.25 L204.73,135.98 L205.78,133.54 L206.83,131.00 L207.88,128.43 L208.93,125.90 L209.98,123.48 L211.03,121.24 L212.08,119.25 L213.13,117.58 L214.18,116.30 L215.23,115.49 L216.28,115.20 L217.33,115.49 L218.37,116.31 L219.42,117.60 L220.47,119.27 L221.52,121.26 L222.57,123.51 L223.62,125.93 L224.67,128.46 L225.72,131.03 L226.77,133.57 L227.82,136.00 L228.87,138.27 L229.92,140.29 L230.97,142.00 L230.97,142.00 M245.66,142.00 L245.66,142.00 L246.70,141.67 L247.75,141.45 L248.80,141.31 L249.85,141.24 L250.90,141.24 L251.95,141.28 L253.00,141.37 L254.05,141.48 L255.10,141.60 L256.15,141.72 L257.20,141.84 L258.25,141.93 L259.30,141.99 L260.34,142.00 L261.39,141.96 L262.44,141.87 L263.49,141.75 L264.54,141.61 L265.59,141.46 L266.64,141.32 L267.69,141.20 L268.74,141.11 L269.79,141.07 L270.84,141.08 L271.89,141.17 L272.94,141.35 L273.99,141.62 L275.03,142.00 L275.03,142.00 M289.72,142.00 L289.72,142.00 L290.77,140.04 L291.82,137.73 L292.87,135.16 L293.92,132.42 L294.97,129.60 L296.02,126.79 L297.07,124.07 L298.12,121.53 L299.17,119.27 L300.22,117.38 L301.27,115.93 L302.32,115.03 L303.36,114.75 L304.41,115.20 L305.46,116.42 L306.51,118.30 L307.56,120.71 L308.61,123.51 L309.66,126.56 L310.71,129.71 L311.76,132.83 L312.81,135.78 L313.86,138.42 L314.91,140.60 L315.83,142.00 M319.10,142.00 L319.10,142.00 L320.15,139.87 L321.20,136.76 L322.25,132.86 L323.30,128.34 L324.35,123.37 L325.40,118.15 L326.45,112.85 L327.50,107.64 L328.55,102.70 L329.60,98.22 L330.65,94.37 L331.69,91.33 L332.74,89.28 L333.79,88.40 L334.84,88.81 L335.89,90.40 L336.94,93.00 L337.99,96.46 L339.04,100.61 L340.09,105.29 L341.14,110.33 L342.19,115.57 L343.24,120.85 L344.29,125.99 L345.33,130.84 L346.38,135.24 L347.43,139.01 L348.48,142.00 L348.48,142.00 M355.05,142.00 L355.83,140.37 L356.88,137.68 L357.93,134.58 L358.98,131.13 L360.02,127.40 L361.07,123.46 L362.12,119.37 L363.17,115.20 L364.22,111.02 L365.27,106.90 L366.32,102.92 L367.37,99.13 L368.42,95.63 L369.47,92.47 L370.52,89.73 L371.57,87.49 L372.62,85.81 L373.67,84.76 L374.71,84.43 L375.76,84.88 L376.81,86.18 L377.86,88.40 L378.91,91.58 L379.96,95.58 L381.01,100.21 L382.06,105.31 L383.11,110.68 L384.16,116.16 L385.21,121.55 L386.26,126.69 L387.31,131.38 L388.35,135.46 L389.40,138.74 L390.45,141.04 L391.33,142.00 M392.55,142.00 L392.55,142.00 L393.60,140.35 L394.65,137.37 L395.70,133.22 L396.75,128.09 L397.80,122.15 L398.85,115.59 L399.90,108.56 L400.95,101.27 L402.00,93.87 L403.04,86.55 L404.09,79.49 L405.14,72.86 L406.19,66.84 L407.24,61.60 L408.29,57.29 L409.34,53.88 L410.39,51.32 L411.44,49.54 L412.49,48.48 L413.54,48.08 L414.59,48.29 L415.64,49.04 L416.68,50.28 L417.73,51.94 L418.78,53.96 L419.83,56.28 L420.88,58.85 L421.93,61.60 L422.98,64.47 L424.03,67.42 L425.08,70.37 L426.13,73.29 L427.18,76.12 L428.23,78.79 L429.28,81.27 L430.33,83.49 L431.37,85.39 L432.42,86.94 L433.47,88.07 L434.52,88.72 L435.57,88.85 L436.62,88.40 L437.67,87.34 L438.72,85.75 L439.77,83.72 L440.82,81.36 L441.87,78.77 L442.92,76.04 L443.97,73.29 L445.01,70.61 L446.06,68.09 L447.11,65.85 L448.16,63.98 L449.21,62.58 L450.26,61.75 L451.31,61.60 L452.36,62.19 L453.41,63.51 L454.46,65.48 L455.51,68.07 L456.56,71.21 L457.61,74.84 L458.66,78.92 L459.70,83.38 L460.75,88.18 L461.80,93.25 L462.85,98.55 L463.90,104.01 L464.95,109.57 L466.00,115.20" stroke="#0000ff" stroke-width="2.1" fill="none" stroke-linejoin="round"/></g><text x="34.60" y="146.20" text-anchor="end" font-family="Liberation Sans, sans-serif" font-size="11" fill="#444">pps</text><text x="34.60" y="119.40" text-anchor="end" font-family="Liberation Sans, sans-serif" font-size="11" fill="#444">1</text><text x="34.60" y="92.60" text-anchor="end" font-family="Liberation Sans, sans-serif" font-size="11" fill="#444">2</text><text x="34.60" y="65.80" text-anchor="end" font-family="Liberation Sans, sans-serif" font-size="11" fill="#444">3</text><text x="34.60" y="39.00" text-anchor="end" font-family="Liberation Sans, sans-serif" font-size="11" fill="#444">4</text><text x="34.60" y="12.20" text-anchor="end" font-family="Liberation Sans, sans-serif" font-size="11" fill="#444">5</text></svg>
<div class="t" style="left:145.00px;top:635.60px;font-size:12px;line-height:14px;color:#222">Copyright 2014-2016 Netonix</div>
</div>
</div>
</body></html>
